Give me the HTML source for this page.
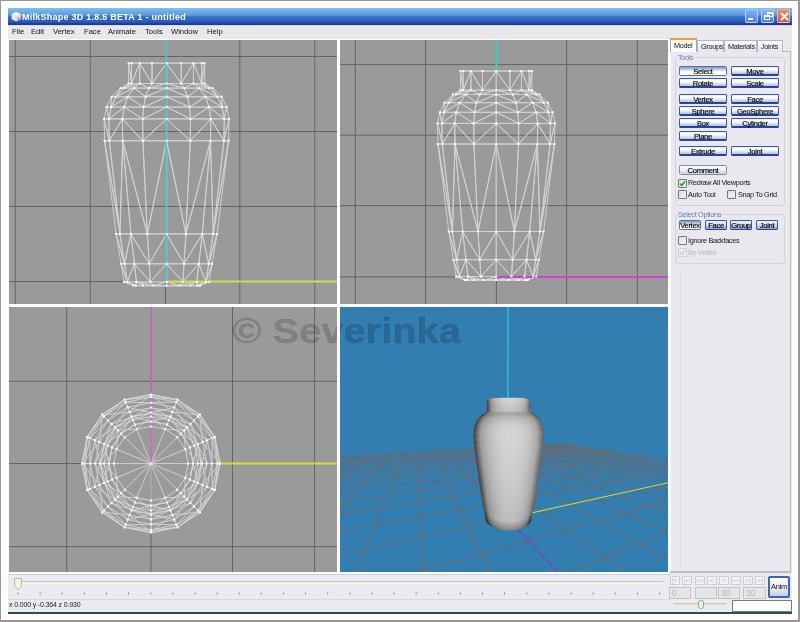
<!DOCTYPE html><html><head><meta charset="utf-8"><style>
*{margin:0;padding:0;box-sizing:border-box}
html,body{width:800px;height:622px;overflow:hidden;background:#fff}
body{position:relative;font-family:"Liberation Sans",sans-serif}
.t,.lbl,.btn,.nf,.ab{will-change:transform}
.a{position:absolute}
.t{position:absolute;white-space:nowrap;line-height:1}
.btn{position:absolute;height:10px;border:1.3px solid #3758a8;border-bottom:2px solid #26459a;border-radius:1.5px;
 background:linear-gradient(#e2e8f5 0%,#ffffff 22%,#f6f8fb 45%,#b2bfdb 100%);
 font-size:7.6px;color:#000;text-align:center;line-height:9px;letter-spacing:-0.3px;white-space:nowrap;overflow:visible;-webkit-text-stroke:0.15px #000}
.btn.p{border:1.2px solid #56709a;background:linear-gradient(#7f97bc 0%,#c9d4e6 35%,#ffffff 60%,#ffffff 100%)}
.chk{position:absolute;width:9px;height:9px;border:1.2px solid #6a788e;border-radius:1px;background:linear-gradient(135deg,#dedfd8,#f7f7f2)}
.lbl{position:absolute;font-size:7.3px;color:#151515;line-height:1;white-space:nowrap;letter-spacing:-0.32px}
.ab{position:absolute;top:576px;width:10px;height:9px;border:1px solid #cfd0d6;background:#f4f4f6;font-size:7px;color:#bbb;text-align:center;line-height:7px}
.nf{position:absolute;top:587px;height:12px;border:1px solid #c2c2c8;background:#e6e5ea;font-size:8.5px;color:#b4b4b8;line-height:10px;padding-left:2px}
</style></head><body>
<div class="a" style="left:0;top:0;width:800px;height:1px;background:#979797"></div>
<div class="a" style="left:0;top:0;width:1px;height:622px;background:#979797"></div>
<div class="a" style="left:798px;top:0;width:2px;height:622px;background:#979797"></div>
<div class="a" style="left:0;top:620px;width:800px;height:2px;background:#979797"></div>
<div class="a" style="left:8px;top:8px;width:784px;height:17px;background:linear-gradient(#80c2ec 0%,#6cb0e9 18%,#5f98e0 42%,#3579cc 50%,#2e68c2 65%,#2a55b1 85%,#1f3f8e 92%,#1d3a88 100%)"></div>
<div class="a" style="left:8px;top:25px;width:784px;height:1px;background:#d4d6f4"></div>
<svg class="a" style="left:9.5px;top:9.5px" width="12.5" height="12.5" viewBox="0 0 14 14">
<path d="M2 4.5L7 2L12 4.5L12 10L7 12.5L2 10Z" fill="#f2f0f0"/>
<path d="M7 7L12 4.5L12 10L7 12.5Z" fill="#d8d6dc"/><path d="M2 4.5L7 7L7 12.5L2 10Z" fill="#ebe8ea"/>
<path d="M8.5 9.5l2.5-1v1.3l-2.5 1z" fill="#e06060"/></svg>
<div class="t" style="left:22px;top:12.6px;font-size:9px;font-weight:bold;color:#fff;letter-spacing:0.25px">MilkShape 3D 1.8.5 BETA 1 - untitled</div>
<div class="a" style="left:744.8px;top:8.5px;width:13.5px;height:14.5px;border:1px solid rgba(235,240,255,0.6);border-radius:2px;background:linear-gradient(#80b6f0,#4c80dc)"><div class="a" style="left:2.5px;top:8.5px;width:5px;height:2px;background:#fff"></div></div>
<div class="a" style="left:760.9px;top:8.5px;width:13.5px;height:14.5px;border:1px solid rgba(235,240,255,0.6);border-radius:2px;background:linear-gradient(#80b6f0,#4c80dc)"><div class="a" style="left:5px;top:2px;width:6px;height:5px;border:1px solid #fff;border-top-width:2px"></div><div class="a" style="left:2px;top:5px;width:6px;height:5px;border:1px solid #fff;border-top-width:2px;background:#5a8ce2"></div></div>
<div class="a" style="left:776.6px;top:8.5px;width:13.5px;height:14.5px;border:1px solid rgba(235,240,255,0.6);border-radius:2px;background:linear-gradient(#ee8a6a,#dc5630)"><svg class="a" style="left:2px;top:2px" width="9" height="9"><path d="M1 1L8 8M8 1L1 8" stroke="#fff" stroke-width="1.8"/></svg></div>
<div class="a" style="left:8px;top:26px;width:784px;height:13px;background:#e9e8ec"></div>
<div class="t" style="left:12.0px;top:28.1px;font-size:7.6px;color:#101010">File</div>
<div class="t" style="left:31.0px;top:28.1px;font-size:7.6px;color:#101010">Edit</div>
<div class="t" style="left:52.5px;top:28.1px;font-size:7.6px;color:#101010">Vertex</div>
<div class="t" style="left:84.0px;top:28.1px;font-size:7.6px;color:#101010">Face</div>
<div class="t" style="left:108.0px;top:28.1px;font-size:7.6px;color:#101010">Animate</div>
<div class="t" style="left:145.0px;top:28.1px;font-size:7.6px;color:#101010">Tools</div>
<div class="t" style="left:170.5px;top:28.1px;font-size:7.6px;color:#101010">Window</div>
<div class="t" style="left:206.5px;top:28.1px;font-size:7.6px;color:#101010">Help</div>
<div class="a" style="left:8px;top:39px;width:662px;height:535px;background:#fdfdfd"></div>
<svg class="a" style="left:0;top:0" width="800" height="622" viewBox="0 0 800 622">
<defs>
<clipPath id="ctl"><rect x="9" y="40" width="328" height="264"/></clipPath>
<clipPath id="ctr"><rect x="340" y="40" width="328" height="264"/></clipPath>
<clipPath id="cbl"><rect x="9" y="307" width="328" height="265"/></clipPath>
<clipPath id="cbr"><rect x="340" y="307" width="328" height="265"/></clipPath>
</defs>
<g clip-path="url(#ctl)"><rect x="9" y="40" width="328" height="264" fill="#9a9a9a"/>
<path d="M15.3 40.0V304.0M90.3 40.0V304.0M165.5 40.0V304.0M239.8 40.0V304.0M314.8 40.0V304.0M9.0 56.5H337.0M9.0 131.5H337.0M9.0 206.5H337.0M9.0 281.5H337.0" stroke="#646464" stroke-width="1.0" fill="none"/>
<path d="M204.6 63.2L201.7 63.2M201.7 63.2L193.5 63.2M193.5 63.2L181.2 63.2M181.2 63.2L166.6 63.2M166.6 63.2L152.0 63.2M152.0 63.2L139.7 63.2M139.7 63.2L131.5 63.2M131.5 63.2L128.6 63.2M128.6 63.2L131.5 63.2M131.5 63.2L139.7 63.2M139.7 63.2L152.0 63.2M152.0 63.2L166.6 63.2M166.6 63.2L181.2 63.2M181.2 63.2L193.5 63.2M193.5 63.2L201.7 63.2M201.7 63.2L204.6 63.2M204.6 83.5L201.7 83.5M201.7 83.5L193.5 83.5M193.5 83.5L181.2 83.5M181.2 83.5L166.6 83.5M166.6 83.5L152.0 83.5M152.0 83.5L139.7 83.5M139.7 83.5L131.5 83.5M131.5 83.5L128.6 83.5M128.6 83.5L131.5 83.5M131.5 83.5L139.7 83.5M139.7 83.5L152.0 83.5M152.0 83.5L166.6 83.5M166.6 83.5L181.2 83.5M181.2 83.5L193.5 83.5M193.5 83.5L201.7 83.5M201.7 83.5L204.6 83.5M212.6 88.1L209.1 88.1M209.1 88.1L199.1 88.1M199.1 88.1L184.2 88.1M184.2 88.1L166.6 88.1M166.6 88.1L149.0 88.1M149.0 88.1L134.1 88.1M134.1 88.1L124.1 88.1M124.1 88.1L120.6 88.1M120.6 88.1L124.1 88.1M124.1 88.1L134.1 88.1M134.1 88.1L149.0 88.1M149.0 88.1L166.6 88.1M166.6 88.1L184.2 88.1M184.2 88.1L199.1 88.1M199.1 88.1L209.1 88.1M209.1 88.1L212.6 88.1M221.6 96.8L217.4 96.8M217.4 96.8L205.5 96.8M205.5 96.8L187.6 96.8M187.6 96.8L166.6 96.8M166.6 96.8L145.6 96.8M145.6 96.8L127.7 96.8M127.7 96.8L115.8 96.8M115.8 96.8L111.6 96.8M111.6 96.8L115.8 96.8M115.8 96.8L127.7 96.8M127.7 96.8L145.6 96.8M145.6 96.8L166.6 96.8M166.6 96.8L187.6 96.8M187.6 96.8L205.5 96.8M205.5 96.8L217.4 96.8M217.4 96.8L221.6 96.8M226.6 107.1L222.0 107.1M222.0 107.1L209.0 107.1M209.0 107.1L189.6 107.1M189.6 107.1L166.6 107.1M166.6 107.1L143.6 107.1M143.6 107.1L124.2 107.1M124.2 107.1L111.2 107.1M111.2 107.1L106.6 107.1M106.6 107.1L111.2 107.1M111.2 107.1L124.2 107.1M124.2 107.1L143.6 107.1M143.6 107.1L166.6 107.1M166.6 107.1L189.6 107.1M189.6 107.1L209.0 107.1M209.0 107.1L222.0 107.1M222.0 107.1L226.6 107.1M229.1 118.9L224.3 118.9M224.3 118.9L210.8 118.9M210.8 118.9L190.5 118.9M190.5 118.9L166.6 118.9M166.6 118.9L142.7 118.9M142.7 118.9L122.4 118.9M122.4 118.9L108.9 118.9M108.9 118.9L104.1 118.9M104.1 118.9L108.9 118.9M108.9 118.9L122.4 118.9M122.4 118.9L142.7 118.9M142.7 118.9L166.6 118.9M166.6 118.9L190.5 118.9M190.5 118.9L210.8 118.9M210.8 118.9L224.3 118.9M224.3 118.9L229.1 118.9M228.6 140.8L223.9 140.8M223.9 140.8L210.5 140.8M210.5 140.8L190.3 140.8M190.3 140.8L166.6 140.8M166.6 140.8L142.9 140.8M142.9 140.8L122.7 140.8M122.7 140.8L109.3 140.8M109.3 140.8L104.6 140.8M104.6 140.8L109.3 140.8M109.3 140.8L122.7 140.8M122.7 140.8L142.9 140.8M142.9 140.8L166.6 140.8M166.6 140.8L190.3 140.8M190.3 140.8L210.5 140.8M210.5 140.8L223.9 140.8M223.9 140.8L228.6 140.8M217.1 233.9L213.2 233.9M213.2 233.9L202.3 233.9M202.3 233.9L185.9 233.9M185.9 233.9L166.6 233.9M166.6 233.9L147.3 233.9M147.3 233.9L130.9 233.9M130.9 233.9L120.0 233.9M120.0 233.9L116.1 233.9M116.1 233.9L120.0 233.9M120.0 233.9L130.9 233.9M130.9 233.9L147.3 233.9M147.3 233.9L166.6 233.9M166.6 233.9L185.9 233.9M185.9 233.9L202.3 233.9M202.3 233.9L213.2 233.9M213.2 233.9L217.1 233.9M212.1 263.8L208.7 263.8M208.7 263.8L198.8 263.8M198.8 263.8L184.0 263.8M184.0 263.8L166.6 263.8M166.6 263.8L149.2 263.8M149.2 263.8L134.4 263.8M134.4 263.8L124.5 263.8M124.5 263.8L121.1 263.8M121.1 263.8L124.5 263.8M124.5 263.8L134.4 263.8M134.4 263.8L149.2 263.8M149.2 263.8L166.6 263.8M166.6 263.8L184.0 263.8M184.0 263.8L198.8 263.8M198.8 263.8L208.7 263.8M208.7 263.8L212.1 263.8M209.1 281.9L205.9 281.9M205.9 281.9L196.7 281.9M196.7 281.9L182.9 281.9M182.9 281.9L166.6 281.9M166.6 281.9L150.3 281.9M150.3 281.9L136.5 281.9M136.5 281.9L127.3 281.9M127.3 281.9L124.1 281.9M124.1 281.9L127.3 281.9M127.3 281.9L136.5 281.9M136.5 281.9L150.3 281.9M150.3 281.9L166.6 281.9M166.6 281.9L182.9 281.9M182.9 281.9L196.7 281.9M196.7 281.9L205.9 281.9M205.9 281.9L209.1 281.9M200.1 285.6L197.6 285.6M197.6 285.6L190.3 285.6M190.3 285.6L179.4 285.6M179.4 285.6L166.6 285.6M166.6 285.6L153.8 285.6M153.8 285.6L142.9 285.6M142.9 285.6L135.6 285.6M135.6 285.6L133.1 285.6M133.1 285.6L135.6 285.6M135.6 285.6L142.9 285.6M142.9 285.6L153.8 285.6M153.8 285.6L166.6 285.6M166.6 285.6L179.4 285.6M179.4 285.6L190.3 285.6M190.3 285.6L197.6 285.6M197.6 285.6L200.1 285.6M204.6 63.2L204.6 83.5M204.6 63.2L201.7 83.5M201.7 63.2L201.7 83.5M193.5 63.2L201.7 83.5M193.5 63.2L193.5 83.5M193.5 63.2L181.2 83.5M181.2 63.2L181.2 83.5M166.6 63.2L181.2 83.5M166.6 63.2L166.6 83.5M166.6 63.2L152.0 83.5M152.0 63.2L152.0 83.5M139.7 63.2L152.0 83.5M139.7 63.2L139.7 83.5M139.7 63.2L131.5 83.5M131.5 63.2L131.5 83.5M128.6 63.2L131.5 83.5M128.6 63.2L128.6 83.5M128.6 63.2L131.5 83.5M131.5 63.2L131.5 83.5M139.7 63.2L131.5 83.5M139.7 63.2L139.7 83.5M139.7 63.2L152.0 83.5M152.0 63.2L152.0 83.5M166.6 63.2L152.0 83.5M166.6 63.2L166.6 83.5M166.6 63.2L181.2 83.5M181.2 63.2L181.2 83.5M193.5 63.2L181.2 83.5M193.5 63.2L193.5 83.5M193.5 63.2L201.7 83.5M201.7 63.2L201.7 83.5M204.6 63.2L201.7 83.5M204.6 83.5L212.6 88.1M204.6 83.5L209.1 88.1M201.7 83.5L209.1 88.1M193.5 83.5L209.1 88.1M193.5 83.5L199.1 88.1M193.5 83.5L184.2 88.1M181.2 83.5L184.2 88.1M166.6 83.5L184.2 88.1M166.6 83.5L166.6 88.1M166.6 83.5L149.0 88.1M152.0 83.5L149.0 88.1M139.7 83.5L149.0 88.1M139.7 83.5L134.1 88.1M139.7 83.5L124.1 88.1M131.5 83.5L124.1 88.1M128.6 83.5L124.1 88.1M128.6 83.5L120.6 88.1M128.6 83.5L124.1 88.1M131.5 83.5L124.1 88.1M139.7 83.5L124.1 88.1M139.7 83.5L134.1 88.1M139.7 83.5L149.0 88.1M152.0 83.5L149.0 88.1M166.6 83.5L149.0 88.1M166.6 83.5L166.6 88.1M166.6 83.5L184.2 88.1M181.2 83.5L184.2 88.1M193.5 83.5L184.2 88.1M193.5 83.5L199.1 88.1M193.5 83.5L209.1 88.1M201.7 83.5L209.1 88.1M204.6 83.5L209.1 88.1M212.6 88.1L221.6 96.8M212.6 88.1L217.4 96.8M209.1 88.1L217.4 96.8M199.1 88.1L217.4 96.8M199.1 88.1L205.5 96.8M199.1 88.1L187.6 96.8M184.2 88.1L187.6 96.8M166.6 88.1L187.6 96.8M166.6 88.1L166.6 96.8M166.6 88.1L145.6 96.8M149.0 88.1L145.6 96.8M134.1 88.1L145.6 96.8M134.1 88.1L127.7 96.8M134.1 88.1L115.8 96.8M124.1 88.1L115.8 96.8M120.6 88.1L115.8 96.8M120.6 88.1L111.6 96.8M120.6 88.1L115.8 96.8M124.1 88.1L115.8 96.8M134.1 88.1L115.8 96.8M134.1 88.1L127.7 96.8M134.1 88.1L145.6 96.8M149.0 88.1L145.6 96.8M166.6 88.1L145.6 96.8M166.6 88.1L166.6 96.8M166.6 88.1L187.6 96.8M184.2 88.1L187.6 96.8M199.1 88.1L187.6 96.8M199.1 88.1L205.5 96.8M199.1 88.1L217.4 96.8M209.1 88.1L217.4 96.8M212.6 88.1L217.4 96.8M221.6 96.8L226.6 107.1M221.6 96.8L222.0 107.1M217.4 96.8L222.0 107.1M205.5 96.8L222.0 107.1M205.5 96.8L209.0 107.1M205.5 96.8L189.6 107.1M187.6 96.8L189.6 107.1M166.6 96.8L189.6 107.1M166.6 96.8L166.6 107.1M166.6 96.8L143.6 107.1M145.6 96.8L143.6 107.1M127.7 96.8L143.6 107.1M127.7 96.8L124.2 107.1M127.7 96.8L111.2 107.1M115.8 96.8L111.2 107.1M111.6 96.8L111.2 107.1M111.6 96.8L106.6 107.1M111.6 96.8L111.2 107.1M115.8 96.8L111.2 107.1M127.7 96.8L111.2 107.1M127.7 96.8L124.2 107.1M127.7 96.8L143.6 107.1M145.6 96.8L143.6 107.1M166.6 96.8L143.6 107.1M166.6 96.8L166.6 107.1M166.6 96.8L189.6 107.1M187.6 96.8L189.6 107.1M205.5 96.8L189.6 107.1M205.5 96.8L209.0 107.1M205.5 96.8L222.0 107.1M217.4 96.8L222.0 107.1M221.6 96.8L222.0 107.1M226.6 107.1L229.1 118.9M226.6 107.1L224.3 118.9M222.0 107.1L224.3 118.9M209.0 107.1L224.3 118.9M209.0 107.1L210.8 118.9M209.0 107.1L190.5 118.9M189.6 107.1L190.5 118.9M166.6 107.1L190.5 118.9M166.6 107.1L166.6 118.9M166.6 107.1L142.7 118.9M143.6 107.1L142.7 118.9M124.2 107.1L142.7 118.9M124.2 107.1L122.4 118.9M124.2 107.1L108.9 118.9M111.2 107.1L108.9 118.9M106.6 107.1L108.9 118.9M106.6 107.1L104.1 118.9M106.6 107.1L108.9 118.9M111.2 107.1L108.9 118.9M124.2 107.1L108.9 118.9M124.2 107.1L122.4 118.9M124.2 107.1L142.7 118.9M143.6 107.1L142.7 118.9M166.6 107.1L142.7 118.9M166.6 107.1L166.6 118.9M166.6 107.1L190.5 118.9M189.6 107.1L190.5 118.9M209.0 107.1L190.5 118.9M209.0 107.1L210.8 118.9M209.0 107.1L224.3 118.9M222.0 107.1L224.3 118.9M226.6 107.1L224.3 118.9M229.1 118.9L228.6 140.8M229.1 118.9L223.9 140.8M224.3 118.9L223.9 140.8M210.8 118.9L223.9 140.8M210.8 118.9L210.5 140.8M210.8 118.9L190.3 140.8M190.5 118.9L190.3 140.8M166.6 118.9L190.3 140.8M166.6 118.9L166.6 140.8M166.6 118.9L142.9 140.8M142.7 118.9L142.9 140.8M122.4 118.9L142.9 140.8M122.4 118.9L122.7 140.8M122.4 118.9L109.3 140.8M108.9 118.9L109.3 140.8M104.1 118.9L109.3 140.8M104.1 118.9L104.6 140.8M104.1 118.9L109.3 140.8M108.9 118.9L109.3 140.8M122.4 118.9L109.3 140.8M122.4 118.9L122.7 140.8M122.4 118.9L142.9 140.8M142.7 118.9L142.9 140.8M166.6 118.9L142.9 140.8M166.6 118.9L166.6 140.8M166.6 118.9L190.3 140.8M190.5 118.9L190.3 140.8M210.8 118.9L190.3 140.8M210.8 118.9L210.5 140.8M210.8 118.9L223.9 140.8M224.3 118.9L223.9 140.8M229.1 118.9L223.9 140.8M228.6 140.8L217.1 233.9M228.6 140.8L213.2 233.9M223.9 140.8L213.2 233.9M210.5 140.8L213.2 233.9M210.5 140.8L202.3 233.9M210.5 140.8L185.9 233.9M190.3 140.8L185.9 233.9M166.6 140.8L185.9 233.9M166.6 140.8L166.6 233.9M166.6 140.8L147.3 233.9M142.9 140.8L147.3 233.9M122.7 140.8L147.3 233.9M122.7 140.8L130.9 233.9M122.7 140.8L120.0 233.9M109.3 140.8L120.0 233.9M104.6 140.8L120.0 233.9M104.6 140.8L116.1 233.9M104.6 140.8L120.0 233.9M109.3 140.8L120.0 233.9M122.7 140.8L120.0 233.9M122.7 140.8L130.9 233.9M122.7 140.8L147.3 233.9M142.9 140.8L147.3 233.9M166.6 140.8L147.3 233.9M166.6 140.8L166.6 233.9M166.6 140.8L185.9 233.9M190.3 140.8L185.9 233.9M210.5 140.8L185.9 233.9M210.5 140.8L202.3 233.9M210.5 140.8L213.2 233.9M223.9 140.8L213.2 233.9M228.6 140.8L213.2 233.9M217.1 233.9L212.1 263.8M217.1 233.9L208.7 263.8M213.2 233.9L208.7 263.8M202.3 233.9L208.7 263.8M202.3 233.9L198.8 263.8M202.3 233.9L184.0 263.8M185.9 233.9L184.0 263.8M166.6 233.9L184.0 263.8M166.6 233.9L166.6 263.8M166.6 233.9L149.2 263.8M147.3 233.9L149.2 263.8M130.9 233.9L149.2 263.8M130.9 233.9L134.4 263.8M130.9 233.9L124.5 263.8M120.0 233.9L124.5 263.8M116.1 233.9L124.5 263.8M116.1 233.9L121.1 263.8M116.1 233.9L124.5 263.8M120.0 233.9L124.5 263.8M130.9 233.9L124.5 263.8M130.9 233.9L134.4 263.8M130.9 233.9L149.2 263.8M147.3 233.9L149.2 263.8M166.6 233.9L149.2 263.8M166.6 233.9L166.6 263.8M166.6 233.9L184.0 263.8M185.9 233.9L184.0 263.8M202.3 233.9L184.0 263.8M202.3 233.9L198.8 263.8M202.3 233.9L208.7 263.8M213.2 233.9L208.7 263.8M217.1 233.9L208.7 263.8M212.1 263.8L209.1 281.9M212.1 263.8L205.9 281.9M208.7 263.8L205.9 281.9M198.8 263.8L205.9 281.9M198.8 263.8L196.7 281.9M198.8 263.8L182.9 281.9M184.0 263.8L182.9 281.9M166.6 263.8L182.9 281.9M166.6 263.8L166.6 281.9M166.6 263.8L150.3 281.9M149.2 263.8L150.3 281.9M134.4 263.8L150.3 281.9M134.4 263.8L136.5 281.9M134.4 263.8L127.3 281.9M124.5 263.8L127.3 281.9M121.1 263.8L127.3 281.9M121.1 263.8L124.1 281.9M121.1 263.8L127.3 281.9M124.5 263.8L127.3 281.9M134.4 263.8L127.3 281.9M134.4 263.8L136.5 281.9M134.4 263.8L150.3 281.9M149.2 263.8L150.3 281.9M166.6 263.8L150.3 281.9M166.6 263.8L166.6 281.9M166.6 263.8L182.9 281.9M184.0 263.8L182.9 281.9M198.8 263.8L182.9 281.9M198.8 263.8L196.7 281.9M198.8 263.8L205.9 281.9M208.7 263.8L205.9 281.9M212.1 263.8L205.9 281.9M209.1 281.9L200.1 285.6M209.1 281.9L197.6 285.6M205.9 281.9L197.6 285.6M196.7 281.9L197.6 285.6M196.7 281.9L190.3 285.6M196.7 281.9L179.4 285.6M182.9 281.9L179.4 285.6M166.6 281.9L179.4 285.6M166.6 281.9L166.6 285.6M166.6 281.9L153.8 285.6M150.3 281.9L153.8 285.6M136.5 281.9L153.8 285.6M136.5 281.9L142.9 285.6M136.5 281.9L135.6 285.6M127.3 281.9L135.6 285.6M124.1 281.9L135.6 285.6M124.1 281.9L133.1 285.6M124.1 281.9L135.6 285.6M127.3 281.9L135.6 285.6M136.5 281.9L135.6 285.6M136.5 281.9L142.9 285.6M136.5 281.9L153.8 285.6M150.3 281.9L153.8 285.6M166.6 281.9L153.8 285.6M166.6 281.9L166.6 285.6M166.6 281.9L179.4 285.6M182.9 281.9L179.4 285.6M196.7 281.9L179.4 285.6M196.7 281.9L190.3 285.6M196.7 281.9L197.6 285.6M205.9 281.9L197.6 285.6M209.1 281.9L197.6 285.6M166.6 285.6L200.1 285.6M166.6 285.6L197.6 285.6M166.6 285.6L190.3 285.6M166.6 285.6L179.4 285.6M166.6 285.6L166.6 285.6M166.6 285.6L153.8 285.6M166.6 285.6L142.9 285.6M166.6 285.6L135.6 285.6M166.6 285.6L133.1 285.6M166.6 285.6L135.6 285.6M166.6 285.6L142.9 285.6M166.6 285.6L153.8 285.6M166.6 285.6L166.6 285.6M166.6 285.6L179.4 285.6M166.6 285.6L190.3 285.6M166.6 285.6L197.6 285.6" stroke="#d2d2d2" stroke-width="0.95" fill="none"/>
<path d="M166 40V281.5" stroke="#4cc8cc" stroke-width="1.8"/>
<path d="M166 281.5H337" stroke="#d8d84a" stroke-width="2"/>
<path d="M203.6 62.2h2v2h-2zM200.7 62.2h2v2h-2zM192.5 62.2h2v2h-2zM180.2 62.2h2v2h-2zM165.6 62.2h2v2h-2zM151.0 62.2h2v2h-2zM138.7 62.2h2v2h-2zM130.5 62.2h2v2h-2zM127.6 62.2h2v2h-2zM203.6 82.5h2v2h-2zM200.7 82.5h2v2h-2zM192.5 82.5h2v2h-2zM180.2 82.5h2v2h-2zM165.6 82.5h2v2h-2zM151.0 82.5h2v2h-2zM138.7 82.5h2v2h-2zM130.5 82.5h2v2h-2zM127.6 82.5h2v2h-2zM211.6 87.1h2v2h-2zM208.1 87.1h2v2h-2zM198.1 87.1h2v2h-2zM183.2 87.1h2v2h-2zM165.6 87.1h2v2h-2zM148.0 87.1h2v2h-2zM133.1 87.1h2v2h-2zM123.1 87.1h2v2h-2zM119.6 87.1h2v2h-2zM220.6 95.8h2v2h-2zM216.4 95.8h2v2h-2zM204.5 95.8h2v2h-2zM186.6 95.8h2v2h-2zM165.6 95.8h2v2h-2zM144.6 95.8h2v2h-2zM126.7 95.8h2v2h-2zM114.8 95.8h2v2h-2zM110.6 95.8h2v2h-2zM225.6 106.1h2v2h-2zM221.0 106.1h2v2h-2zM208.0 106.1h2v2h-2zM188.6 106.1h2v2h-2zM165.6 106.1h2v2h-2zM142.6 106.1h2v2h-2zM123.2 106.1h2v2h-2zM110.2 106.1h2v2h-2zM105.6 106.1h2v2h-2zM228.1 117.9h2v2h-2zM223.3 117.9h2v2h-2zM209.8 117.9h2v2h-2zM189.5 117.9h2v2h-2zM165.6 117.9h2v2h-2zM141.7 117.9h2v2h-2zM121.4 117.9h2v2h-2zM107.9 117.9h2v2h-2zM103.1 117.9h2v2h-2zM227.6 139.8h2v2h-2zM222.9 139.8h2v2h-2zM209.5 139.8h2v2h-2zM189.3 139.8h2v2h-2zM165.6 139.8h2v2h-2zM141.9 139.8h2v2h-2zM121.7 139.8h2v2h-2zM108.3 139.8h2v2h-2zM103.6 139.8h2v2h-2zM216.1 232.9h2v2h-2zM212.2 232.9h2v2h-2zM201.3 232.9h2v2h-2zM184.9 232.9h2v2h-2zM165.6 232.9h2v2h-2zM146.3 232.9h2v2h-2zM129.9 232.9h2v2h-2zM119.0 232.9h2v2h-2zM115.1 232.9h2v2h-2zM211.1 262.8h2v2h-2zM207.7 262.8h2v2h-2zM197.8 262.8h2v2h-2zM183.0 262.8h2v2h-2zM165.6 262.8h2v2h-2zM148.2 262.8h2v2h-2zM133.4 262.8h2v2h-2zM123.5 262.8h2v2h-2zM120.1 262.8h2v2h-2zM208.1 280.9h2v2h-2zM204.9 280.9h2v2h-2zM195.7 280.9h2v2h-2zM181.9 280.9h2v2h-2zM165.6 280.9h2v2h-2zM149.3 280.9h2v2h-2zM135.5 280.9h2v2h-2zM126.3 280.9h2v2h-2zM123.1 280.9h2v2h-2zM199.1 284.6h2v2h-2zM196.6 284.6h2v2h-2zM189.3 284.6h2v2h-2zM178.4 284.6h2v2h-2zM165.6 284.6h2v2h-2zM152.8 284.6h2v2h-2zM141.9 284.6h2v2h-2zM134.6 284.6h2v2h-2zM132.1 284.6h2v2h-2z" fill="#ffffff"/>
</g>
<g clip-path="url(#ctr)"><rect x="340" y="40" width="328" height="264" fill="#9a9a9a"/>
<path d="M355.3 40.0V304.0M425.6 40.0V304.0M496.4 40.0V304.0M566.6 40.0V304.0M637.3 40.0V304.0M340.0 64.6H668.0M340.0 135.2H668.0M340.0 205.6H668.0M340.0 276.9H668.0" stroke="#646464" stroke-width="1.0" fill="none"/>
<path d="M496.5 40V71.5" stroke="#3ccfcf" stroke-width="2"/>
<path d="M496.2 71.1L509.9 71.1M509.9 71.1L521.5 71.1M521.5 71.1L529.2 71.1M529.2 71.1L531.9 71.1M531.9 71.1L529.2 71.1M529.2 71.1L521.5 71.1M521.5 71.1L509.9 71.1M509.9 71.1L496.2 71.1M496.2 71.1L482.5 71.1M482.5 71.1L470.9 71.1M470.9 71.1L463.2 71.1M463.2 71.1L460.5 71.1M460.5 71.1L463.2 71.1M463.2 71.1L470.9 71.1M470.9 71.1L482.5 71.1M482.5 71.1L496.2 71.1M496.2 90.2L509.9 90.2M509.9 90.2L521.5 90.2M521.5 90.2L529.2 90.2M529.2 90.2L531.9 90.2M531.9 90.2L529.2 90.2M529.2 90.2L521.5 90.2M521.5 90.2L509.9 90.2M509.9 90.2L496.2 90.2M496.2 90.2L482.5 90.2M482.5 90.2L470.9 90.2M470.9 90.2L463.2 90.2M463.2 90.2L460.5 90.2M460.5 90.2L463.2 90.2M463.2 90.2L470.9 90.2M470.9 90.2L482.5 90.2M482.5 90.2L496.2 90.2M496.2 94.5L512.7 94.5M512.7 94.5L526.8 94.5M526.8 94.5L536.1 94.5M536.1 94.5L539.4 94.5M539.4 94.5L536.1 94.5M536.1 94.5L526.8 94.5M526.8 94.5L512.7 94.5M512.7 94.5L496.2 94.5M496.2 94.5L479.7 94.5M479.7 94.5L465.6 94.5M465.6 94.5L456.3 94.5M456.3 94.5L453.0 94.5M453.0 94.5L456.3 94.5M456.3 94.5L465.6 94.5M465.6 94.5L479.7 94.5M479.7 94.5L496.2 94.5M496.2 102.7L516.0 102.7M516.0 102.7L532.7 102.7M532.7 102.7L543.9 102.7M543.9 102.7L547.9 102.7M547.9 102.7L543.9 102.7M543.9 102.7L532.7 102.7M532.7 102.7L516.0 102.7M516.0 102.7L496.2 102.7M496.2 102.7L476.4 102.7M476.4 102.7L459.7 102.7M459.7 102.7L448.5 102.7M448.5 102.7L444.5 102.7M444.5 102.7L448.5 102.7M448.5 102.7L459.7 102.7M459.7 102.7L476.4 102.7M476.4 102.7L496.2 102.7M496.2 112.3L517.8 112.3M517.8 112.3L536.1 112.3M536.1 112.3L548.3 112.3M548.3 112.3L552.6 112.3M552.6 112.3L548.3 112.3M548.3 112.3L536.1 112.3M536.1 112.3L517.8 112.3M517.8 112.3L496.2 112.3M496.2 112.3L474.6 112.3M474.6 112.3L456.3 112.3M456.3 112.3L444.1 112.3M444.1 112.3L439.8 112.3M439.8 112.3L444.1 112.3M444.1 112.3L456.3 112.3M456.3 112.3L474.6 112.3M474.6 112.3L496.2 112.3M496.2 123.4L518.7 123.4M518.7 123.4L537.7 123.4M537.7 123.4L550.5 123.4M550.5 123.4L554.9 123.4M554.9 123.4L550.5 123.4M550.5 123.4L537.7 123.4M537.7 123.4L518.7 123.4M518.7 123.4L496.2 123.4M496.2 123.4L473.7 123.4M473.7 123.4L454.7 123.4M454.7 123.4L441.9 123.4M441.9 123.4L437.5 123.4M437.5 123.4L441.9 123.4M441.9 123.4L454.7 123.4M454.7 123.4L473.7 123.4M473.7 123.4L496.2 123.4M496.2 144.0L518.5 144.0M518.5 144.0L537.4 144.0M537.4 144.0L550.1 144.0M550.1 144.0L554.5 144.0M554.5 144.0L550.1 144.0M550.1 144.0L537.4 144.0M537.4 144.0L518.5 144.0M518.5 144.0L496.2 144.0M496.2 144.0L473.9 144.0M473.9 144.0L455.0 144.0M455.0 144.0L442.3 144.0M442.3 144.0L437.9 144.0M437.9 144.0L442.3 144.0M442.3 144.0L455.0 144.0M455.0 144.0L473.9 144.0M473.9 144.0L496.2 144.0M496.2 231.5L514.4 231.5M514.4 231.5L529.7 231.5M529.7 231.5L540.0 231.5M540.0 231.5L543.6 231.5M543.6 231.5L540.0 231.5M540.0 231.5L529.7 231.5M529.7 231.5L514.4 231.5M514.4 231.5L496.2 231.5M496.2 231.5L478.0 231.5M478.0 231.5L462.7 231.5M462.7 231.5L452.4 231.5M452.4 231.5L448.8 231.5M448.8 231.5L452.4 231.5M452.4 231.5L462.7 231.5M462.7 231.5L478.0 231.5M478.0 231.5L496.2 231.5M496.2 259.7L512.6 259.7M512.6 259.7L526.5 259.7M526.5 259.7L535.7 259.7M535.7 259.7L539.0 259.7M539.0 259.7L535.7 259.7M535.7 259.7L526.5 259.7M526.5 259.7L512.6 259.7M512.6 259.7L496.2 259.7M496.2 259.7L479.8 259.7M479.8 259.7L465.9 259.7M465.9 259.7L456.7 259.7M456.7 259.7L453.4 259.7M453.4 259.7L456.7 259.7M456.7 259.7L465.9 259.7M465.9 259.7L479.8 259.7M479.8 259.7L496.2 259.7M496.2 276.6L511.5 276.6M511.5 276.6L524.5 276.6M524.5 276.6L533.1 276.6M533.1 276.6L536.2 276.6M536.2 276.6L533.1 276.6M533.1 276.6L524.5 276.6M524.5 276.6L511.5 276.6M511.5 276.6L496.2 276.6M496.2 276.6L480.9 276.6M480.9 276.6L467.9 276.6M467.9 276.6L459.3 276.6M459.3 276.6L456.2 276.6M456.2 276.6L459.3 276.6M459.3 276.6L467.9 276.6M467.9 276.6L480.9 276.6M480.9 276.6L496.2 276.6M496.2 280.1L508.3 280.1M508.3 280.1L518.5 280.1M518.5 280.1L525.3 280.1M525.3 280.1L527.7 280.1M527.7 280.1L525.3 280.1M525.3 280.1L518.5 280.1M518.5 280.1L508.3 280.1M508.3 280.1L496.2 280.1M496.2 280.1L484.1 280.1M484.1 280.1L473.9 280.1M473.9 280.1L467.1 280.1M467.1 280.1L464.7 280.1M464.7 280.1L467.1 280.1M467.1 280.1L473.9 280.1M473.9 280.1L484.1 280.1M484.1 280.1L496.2 280.1M496.2 71.1L496.2 90.2M496.2 71.1L509.9 90.2M509.9 71.1L509.9 90.2M521.5 71.1L509.9 90.2M521.5 71.1L521.5 90.2M521.5 71.1L529.2 90.2M529.2 71.1L529.2 90.2M531.9 71.1L529.2 90.2M531.9 71.1L531.9 90.2M531.9 71.1L529.2 90.2M529.2 71.1L529.2 90.2M521.5 71.1L529.2 90.2M521.5 71.1L521.5 90.2M521.5 71.1L509.9 90.2M509.9 71.1L509.9 90.2M496.2 71.1L509.9 90.2M496.2 71.1L496.2 90.2M496.2 71.1L482.5 90.2M482.5 71.1L482.5 90.2M470.9 71.1L482.5 90.2M470.9 71.1L470.9 90.2M470.9 71.1L463.2 90.2M463.2 71.1L463.2 90.2M460.5 71.1L463.2 90.2M460.5 71.1L460.5 90.2M460.5 71.1L463.2 90.2M463.2 71.1L463.2 90.2M470.9 71.1L463.2 90.2M470.9 71.1L470.9 90.2M470.9 71.1L482.5 90.2M482.5 71.1L482.5 90.2M496.2 71.1L482.5 90.2M496.2 90.2L496.2 94.5M496.2 90.2L512.7 94.5M509.9 90.2L512.7 94.5M521.5 90.2L512.7 94.5M521.5 90.2L526.8 94.5M521.5 90.2L536.1 94.5M529.2 90.2L536.1 94.5M531.9 90.2L536.1 94.5M531.9 90.2L539.4 94.5M531.9 90.2L536.1 94.5M529.2 90.2L536.1 94.5M521.5 90.2L536.1 94.5M521.5 90.2L526.8 94.5M521.5 90.2L512.7 94.5M509.9 90.2L512.7 94.5M496.2 90.2L512.7 94.5M496.2 90.2L496.2 94.5M496.2 90.2L479.7 94.5M482.5 90.2L479.7 94.5M470.9 90.2L479.7 94.5M470.9 90.2L465.6 94.5M470.9 90.2L456.3 94.5M463.2 90.2L456.3 94.5M460.5 90.2L456.3 94.5M460.5 90.2L453.0 94.5M460.5 90.2L456.3 94.5M463.2 90.2L456.3 94.5M470.9 90.2L456.3 94.5M470.9 90.2L465.6 94.5M470.9 90.2L479.7 94.5M482.5 90.2L479.7 94.5M496.2 90.2L479.7 94.5M496.2 94.5L496.2 102.7M496.2 94.5L516.0 102.7M512.7 94.5L516.0 102.7M526.8 94.5L516.0 102.7M526.8 94.5L532.7 102.7M526.8 94.5L543.9 102.7M536.1 94.5L543.9 102.7M539.4 94.5L543.9 102.7M539.4 94.5L547.9 102.7M539.4 94.5L543.9 102.7M536.1 94.5L543.9 102.7M526.8 94.5L543.9 102.7M526.8 94.5L532.7 102.7M526.8 94.5L516.0 102.7M512.7 94.5L516.0 102.7M496.2 94.5L516.0 102.7M496.2 94.5L496.2 102.7M496.2 94.5L476.4 102.7M479.7 94.5L476.4 102.7M465.6 94.5L476.4 102.7M465.6 94.5L459.7 102.7M465.6 94.5L448.5 102.7M456.3 94.5L448.5 102.7M453.0 94.5L448.5 102.7M453.0 94.5L444.5 102.7M453.0 94.5L448.5 102.7M456.3 94.5L448.5 102.7M465.6 94.5L448.5 102.7M465.6 94.5L459.7 102.7M465.6 94.5L476.4 102.7M479.7 94.5L476.4 102.7M496.2 94.5L476.4 102.7M496.2 102.7L496.2 112.3M496.2 102.7L517.8 112.3M516.0 102.7L517.8 112.3M532.7 102.7L517.8 112.3M532.7 102.7L536.1 112.3M532.7 102.7L548.3 112.3M543.9 102.7L548.3 112.3M547.9 102.7L548.3 112.3M547.9 102.7L552.6 112.3M547.9 102.7L548.3 112.3M543.9 102.7L548.3 112.3M532.7 102.7L548.3 112.3M532.7 102.7L536.1 112.3M532.7 102.7L517.8 112.3M516.0 102.7L517.8 112.3M496.2 102.7L517.8 112.3M496.2 102.7L496.2 112.3M496.2 102.7L474.6 112.3M476.4 102.7L474.6 112.3M459.7 102.7L474.6 112.3M459.7 102.7L456.3 112.3M459.7 102.7L444.1 112.3M448.5 102.7L444.1 112.3M444.5 102.7L444.1 112.3M444.5 102.7L439.8 112.3M444.5 102.7L444.1 112.3M448.5 102.7L444.1 112.3M459.7 102.7L444.1 112.3M459.7 102.7L456.3 112.3M459.7 102.7L474.6 112.3M476.4 102.7L474.6 112.3M496.2 102.7L474.6 112.3M496.2 112.3L496.2 123.4M496.2 112.3L518.7 123.4M517.8 112.3L518.7 123.4M536.1 112.3L518.7 123.4M536.1 112.3L537.7 123.4M536.1 112.3L550.5 123.4M548.3 112.3L550.5 123.4M552.6 112.3L550.5 123.4M552.6 112.3L554.9 123.4M552.6 112.3L550.5 123.4M548.3 112.3L550.5 123.4M536.1 112.3L550.5 123.4M536.1 112.3L537.7 123.4M536.1 112.3L518.7 123.4M517.8 112.3L518.7 123.4M496.2 112.3L518.7 123.4M496.2 112.3L496.2 123.4M496.2 112.3L473.7 123.4M474.6 112.3L473.7 123.4M456.3 112.3L473.7 123.4M456.3 112.3L454.7 123.4M456.3 112.3L441.9 123.4M444.1 112.3L441.9 123.4M439.8 112.3L441.9 123.4M439.8 112.3L437.5 123.4M439.8 112.3L441.9 123.4M444.1 112.3L441.9 123.4M456.3 112.3L441.9 123.4M456.3 112.3L454.7 123.4M456.3 112.3L473.7 123.4M474.6 112.3L473.7 123.4M496.2 112.3L473.7 123.4M496.2 123.4L496.2 144.0M496.2 123.4L518.5 144.0M518.7 123.4L518.5 144.0M537.7 123.4L518.5 144.0M537.7 123.4L537.4 144.0M537.7 123.4L550.1 144.0M550.5 123.4L550.1 144.0M554.9 123.4L550.1 144.0M554.9 123.4L554.5 144.0M554.9 123.4L550.1 144.0M550.5 123.4L550.1 144.0M537.7 123.4L550.1 144.0M537.7 123.4L537.4 144.0M537.7 123.4L518.5 144.0M518.7 123.4L518.5 144.0M496.2 123.4L518.5 144.0M496.2 123.4L496.2 144.0M496.2 123.4L473.9 144.0M473.7 123.4L473.9 144.0M454.7 123.4L473.9 144.0M454.7 123.4L455.0 144.0M454.7 123.4L442.3 144.0M441.9 123.4L442.3 144.0M437.5 123.4L442.3 144.0M437.5 123.4L437.9 144.0M437.5 123.4L442.3 144.0M441.9 123.4L442.3 144.0M454.7 123.4L442.3 144.0M454.7 123.4L455.0 144.0M454.7 123.4L473.9 144.0M473.7 123.4L473.9 144.0M496.2 123.4L473.9 144.0M496.2 144.0L496.2 231.5M496.2 144.0L514.4 231.5M518.5 144.0L514.4 231.5M537.4 144.0L514.4 231.5M537.4 144.0L529.7 231.5M537.4 144.0L540.0 231.5M550.1 144.0L540.0 231.5M554.5 144.0L540.0 231.5M554.5 144.0L543.6 231.5M554.5 144.0L540.0 231.5M550.1 144.0L540.0 231.5M537.4 144.0L540.0 231.5M537.4 144.0L529.7 231.5M537.4 144.0L514.4 231.5M518.5 144.0L514.4 231.5M496.2 144.0L514.4 231.5M496.2 144.0L496.2 231.5M496.2 144.0L478.0 231.5M473.9 144.0L478.0 231.5M455.0 144.0L478.0 231.5M455.0 144.0L462.7 231.5M455.0 144.0L452.4 231.5M442.3 144.0L452.4 231.5M437.9 144.0L452.4 231.5M437.9 144.0L448.8 231.5M437.9 144.0L452.4 231.5M442.3 144.0L452.4 231.5M455.0 144.0L452.4 231.5M455.0 144.0L462.7 231.5M455.0 144.0L478.0 231.5M473.9 144.0L478.0 231.5M496.2 144.0L478.0 231.5M496.2 231.5L496.2 259.7M496.2 231.5L512.6 259.7M514.4 231.5L512.6 259.7M529.7 231.5L512.6 259.7M529.7 231.5L526.5 259.7M529.7 231.5L535.7 259.7M540.0 231.5L535.7 259.7M543.6 231.5L535.7 259.7M543.6 231.5L539.0 259.7M543.6 231.5L535.7 259.7M540.0 231.5L535.7 259.7M529.7 231.5L535.7 259.7M529.7 231.5L526.5 259.7M529.7 231.5L512.6 259.7M514.4 231.5L512.6 259.7M496.2 231.5L512.6 259.7M496.2 231.5L496.2 259.7M496.2 231.5L479.8 259.7M478.0 231.5L479.8 259.7M462.7 231.5L479.8 259.7M462.7 231.5L465.9 259.7M462.7 231.5L456.7 259.7M452.4 231.5L456.7 259.7M448.8 231.5L456.7 259.7M448.8 231.5L453.4 259.7M448.8 231.5L456.7 259.7M452.4 231.5L456.7 259.7M462.7 231.5L456.7 259.7M462.7 231.5L465.9 259.7M462.7 231.5L479.8 259.7M478.0 231.5L479.8 259.7M496.2 231.5L479.8 259.7M496.2 259.7L496.2 276.6M496.2 259.7L511.5 276.6M512.6 259.7L511.5 276.6M526.5 259.7L511.5 276.6M526.5 259.7L524.5 276.6M526.5 259.7L533.1 276.6M535.7 259.7L533.1 276.6M539.0 259.7L533.1 276.6M539.0 259.7L536.2 276.6M539.0 259.7L533.1 276.6M535.7 259.7L533.1 276.6M526.5 259.7L533.1 276.6M526.5 259.7L524.5 276.6M526.5 259.7L511.5 276.6M512.6 259.7L511.5 276.6M496.2 259.7L511.5 276.6M496.2 259.7L496.2 276.6M496.2 259.7L480.9 276.6M479.8 259.7L480.9 276.6M465.9 259.7L480.9 276.6M465.9 259.7L467.9 276.6M465.9 259.7L459.3 276.6M456.7 259.7L459.3 276.6M453.4 259.7L459.3 276.6M453.4 259.7L456.2 276.6M453.4 259.7L459.3 276.6M456.7 259.7L459.3 276.6M465.9 259.7L459.3 276.6M465.9 259.7L467.9 276.6M465.9 259.7L480.9 276.6M479.8 259.7L480.9 276.6M496.2 259.7L480.9 276.6M496.2 276.6L496.2 280.1M496.2 276.6L508.3 280.1M511.5 276.6L508.3 280.1M524.5 276.6L508.3 280.1M524.5 276.6L518.5 280.1M524.5 276.6L525.3 280.1M533.1 276.6L525.3 280.1M536.2 276.6L525.3 280.1M536.2 276.6L527.7 280.1M536.2 276.6L525.3 280.1M533.1 276.6L525.3 280.1M524.5 276.6L525.3 280.1M524.5 276.6L518.5 280.1M524.5 276.6L508.3 280.1M511.5 276.6L508.3 280.1M496.2 276.6L508.3 280.1M496.2 276.6L496.2 280.1M496.2 276.6L484.1 280.1M480.9 276.6L484.1 280.1M467.9 276.6L484.1 280.1M467.9 276.6L473.9 280.1M467.9 276.6L467.1 280.1M459.3 276.6L467.1 280.1M456.2 276.6L467.1 280.1M456.2 276.6L464.7 280.1M456.2 276.6L467.1 280.1M459.3 276.6L467.1 280.1M467.9 276.6L467.1 280.1M467.9 276.6L473.9 280.1M467.9 276.6L484.1 280.1M480.9 276.6L484.1 280.1M496.2 276.6L484.1 280.1M496.2 280.1L496.2 280.1M496.2 280.1L508.3 280.1M496.2 280.1L518.5 280.1M496.2 280.1L525.3 280.1M496.2 280.1L527.7 280.1M496.2 280.1L525.3 280.1M496.2 280.1L518.5 280.1M496.2 280.1L508.3 280.1M496.2 280.1L496.2 280.1M496.2 280.1L484.1 280.1M496.2 280.1L473.9 280.1M496.2 280.1L467.1 280.1M496.2 280.1L464.7 280.1M496.2 280.1L467.1 280.1M496.2 280.1L473.9 280.1M496.2 280.1L484.1 280.1" stroke="#d2d2d2" stroke-width="0.95" fill="none"/>
<path d="M496.5 277H668" stroke="#d040d0" stroke-width="2"/>
<path d="M495.2 70.1h2v2h-2zM508.9 70.1h2v2h-2zM520.5 70.1h2v2h-2zM528.2 70.1h2v2h-2zM530.9 70.1h2v2h-2zM481.5 70.1h2v2h-2zM469.9 70.1h2v2h-2zM462.2 70.1h2v2h-2zM459.5 70.1h2v2h-2zM495.2 89.2h2v2h-2zM508.9 89.2h2v2h-2zM520.5 89.2h2v2h-2zM528.2 89.2h2v2h-2zM530.9 89.2h2v2h-2zM481.5 89.2h2v2h-2zM469.9 89.2h2v2h-2zM462.2 89.2h2v2h-2zM459.5 89.2h2v2h-2zM495.2 93.5h2v2h-2zM511.7 93.5h2v2h-2zM525.8 93.5h2v2h-2zM535.1 93.5h2v2h-2zM538.4 93.5h2v2h-2zM478.7 93.5h2v2h-2zM464.6 93.5h2v2h-2zM455.3 93.5h2v2h-2zM452.0 93.5h2v2h-2zM495.2 101.7h2v2h-2zM515.0 101.7h2v2h-2zM531.7 101.7h2v2h-2zM542.9 101.7h2v2h-2zM546.9 101.7h2v2h-2zM475.4 101.7h2v2h-2zM458.7 101.7h2v2h-2zM447.5 101.7h2v2h-2zM443.5 101.7h2v2h-2zM495.2 111.3h2v2h-2zM516.8 111.3h2v2h-2zM535.1 111.3h2v2h-2zM547.3 111.3h2v2h-2zM551.6 111.3h2v2h-2zM473.6 111.3h2v2h-2zM455.3 111.3h2v2h-2zM443.1 111.3h2v2h-2zM438.8 111.3h2v2h-2zM495.2 122.4h2v2h-2zM517.7 122.4h2v2h-2zM536.7 122.4h2v2h-2zM549.5 122.4h2v2h-2zM553.9 122.4h2v2h-2zM472.7 122.4h2v2h-2zM453.7 122.4h2v2h-2zM440.9 122.4h2v2h-2zM436.5 122.4h2v2h-2zM495.2 143.0h2v2h-2zM517.5 143.0h2v2h-2zM536.4 143.0h2v2h-2zM549.1 143.0h2v2h-2zM553.5 143.0h2v2h-2zM472.9 143.0h2v2h-2zM454.0 143.0h2v2h-2zM441.3 143.0h2v2h-2zM436.9 143.0h2v2h-2zM495.2 230.5h2v2h-2zM513.4 230.5h2v2h-2zM528.7 230.5h2v2h-2zM539.0 230.5h2v2h-2zM542.6 230.5h2v2h-2zM477.0 230.5h2v2h-2zM461.7 230.5h2v2h-2zM451.4 230.5h2v2h-2zM447.8 230.5h2v2h-2zM495.2 258.7h2v2h-2zM511.6 258.7h2v2h-2zM525.5 258.7h2v2h-2zM534.7 258.7h2v2h-2zM538.0 258.7h2v2h-2zM478.8 258.7h2v2h-2zM464.9 258.7h2v2h-2zM455.7 258.7h2v2h-2zM452.4 258.7h2v2h-2zM495.2 275.6h2v2h-2zM510.5 275.6h2v2h-2zM523.5 275.6h2v2h-2zM532.1 275.6h2v2h-2zM535.2 275.6h2v2h-2zM479.9 275.6h2v2h-2zM466.9 275.6h2v2h-2zM458.3 275.6h2v2h-2zM455.2 275.6h2v2h-2zM495.2 279.1h2v2h-2zM507.3 279.1h2v2h-2zM517.5 279.1h2v2h-2zM524.3 279.1h2v2h-2zM526.7 279.1h2v2h-2zM483.1 279.1h2v2h-2zM472.9 279.1h2v2h-2zM466.1 279.1h2v2h-2zM463.7 279.1h2v2h-2z" fill="#ffffff"/>
</g>
<g clip-path="url(#cbl)"><rect x="9" y="307" width="328" height="265" fill="#9a9a9a"/>
<path d="M66.7 307.0V572.0M151.0 307.0V572.0M232.5 307.0V572.0M314.6 307.0V572.0M9.0 381.3H337.0M9.0 463.5H337.0M9.0 546.6H337.0" stroke="#646464" stroke-width="1.0" fill="none"/>
<path d="M193.1 463.5L189.9 447.4M189.9 447.4L180.8 433.7M180.8 433.7L167.1 424.6M167.1 424.6L151.0 421.4M151.0 421.4L134.9 424.6M134.9 424.6L121.2 433.7M121.2 433.7L112.1 447.4M112.1 447.4L108.9 463.5M108.9 463.5L112.1 479.6M112.1 479.6L121.2 493.3M121.2 493.3L134.9 502.4M134.9 502.4L151.0 505.6M151.0 505.6L167.1 502.4M167.1 502.4L180.8 493.3M180.8 493.3L189.9 479.6M189.9 479.6L193.1 463.5M193.1 463.5L189.9 447.4M189.9 447.4L180.8 433.7M180.8 433.7L167.1 424.6M167.1 424.6L151.0 421.4M151.0 421.4L134.9 424.6M134.9 424.6L121.2 433.7M121.2 433.7L112.1 447.4M112.1 447.4L108.9 463.5M108.9 463.5L112.1 479.6M112.1 479.6L121.2 493.3M121.2 493.3L134.9 502.4M134.9 502.4L151.0 505.6M151.0 505.6L167.1 502.4M167.1 502.4L180.8 493.3M180.8 493.3L189.9 479.6M189.9 479.6L193.1 463.5M201.9 463.5L198.0 444.0M198.0 444.0L187.0 427.5M187.0 427.5L170.5 416.5M170.5 416.5L151.0 412.6M151.0 412.6L131.5 416.5M131.5 416.5L115.0 427.5M115.0 427.5L104.0 444.0M104.0 444.0L100.1 463.5M100.1 463.5L104.0 483.0M104.0 483.0L115.0 499.5M115.0 499.5L131.5 510.5M131.5 510.5L151.0 514.4M151.0 514.4L170.5 510.5M170.5 510.5L187.0 499.5M187.0 499.5L198.0 483.0M198.0 483.0L201.9 463.5M211.8 463.5L207.2 440.2M207.2 440.2L194.0 420.5M194.0 420.5L174.3 407.3M174.3 407.3L151.0 402.7M151.0 402.7L127.7 407.3M127.7 407.3L108.0 420.5M108.0 420.5L94.8 440.2M94.8 440.2L90.2 463.5M90.2 463.5L94.8 486.8M94.8 486.8L108.0 506.5M108.0 506.5L127.7 519.7M127.7 519.7L151.0 524.3M151.0 524.3L174.3 519.7M174.3 519.7L194.0 506.5M194.0 506.5L207.2 486.8M207.2 486.8L211.8 463.5M217.4 463.5L212.3 438.1M212.3 438.1L198.0 416.5M198.0 416.5L176.4 402.2M176.4 402.2L151.0 397.1M151.0 397.1L125.6 402.2M125.6 402.2L104.0 416.5M104.0 416.5L89.7 438.1M89.7 438.1L84.6 463.5M84.6 463.5L89.7 488.9M89.7 488.9L104.0 510.5M104.0 510.5L125.6 524.8M125.6 524.8L151.0 529.9M151.0 529.9L176.4 524.8M176.4 524.8L198.0 510.5M198.0 510.5L212.3 488.9M212.3 488.9L217.4 463.5M220.1 463.5L214.9 437.0M214.9 437.0L199.9 414.6M199.9 414.6L177.5 399.6M177.5 399.6L151.0 394.4M151.0 394.4L124.5 399.6M124.5 399.6L102.1 414.6M102.1 414.6L87.1 437.0M87.1 437.0L81.9 463.5M81.9 463.5L87.1 490.0M87.1 490.0L102.1 512.4M102.1 512.4L124.5 527.4M124.5 527.4L151.0 532.6M151.0 532.6L177.5 527.4M177.5 527.4L199.9 512.4M199.9 512.4L214.9 490.0M214.9 490.0L220.1 463.5M219.6 463.5L214.4 437.2M214.4 437.2L199.5 415.0M199.5 415.0L177.3 400.1M177.3 400.1L151.0 394.9M151.0 394.9L124.7 400.1M124.7 400.1L102.5 415.0M102.5 415.0L87.6 437.2M87.6 437.2L82.4 463.5M82.4 463.5L87.6 489.8M87.6 489.8L102.5 512.0M102.5 512.0L124.7 526.9M124.7 526.9L151.0 532.1M151.0 532.1L177.3 526.9M177.3 526.9L199.5 512.0M199.5 512.0L214.4 489.8M214.4 489.8L219.6 463.5M206.9 463.5L202.6 442.1M202.6 442.1L190.5 424.0M190.5 424.0L172.4 411.9M172.4 411.9L151.0 407.6M151.0 407.6L129.6 411.9M129.6 411.9L111.5 424.0M111.5 424.0L99.4 442.1M99.4 442.1L95.1 463.5M95.1 463.5L99.4 484.9M99.4 484.9L111.5 503.0M111.5 503.0L129.6 515.1M129.6 515.1L151.0 519.4M151.0 519.4L172.4 515.1M172.4 515.1L190.5 503.0M190.5 503.0L202.6 484.9M202.6 484.9L206.9 463.5M201.4 463.5L197.5 444.2M197.5 444.2L186.6 427.9M186.6 427.9L170.3 417.0M170.3 417.0L151.0 413.1M151.0 413.1L131.7 417.0M131.7 417.0L115.4 427.9M115.4 427.9L104.5 444.2M104.5 444.2L100.6 463.5M100.6 463.5L104.5 482.8M104.5 482.8L115.4 499.1M115.4 499.1L131.7 510.0M131.7 510.0L151.0 513.9M151.0 513.9L170.3 510.0M170.3 510.0L186.6 499.1M186.6 499.1L197.5 482.8M197.5 482.8L201.4 463.5M198.1 463.5L194.5 445.5M194.5 445.5L184.3 430.2M184.3 430.2L169.0 420.0M169.0 420.0L151.0 416.4M151.0 416.4L133.0 420.0M133.0 420.0L117.7 430.2M117.7 430.2L107.5 445.5M107.5 445.5L103.9 463.5M103.9 463.5L107.5 481.5M107.5 481.5L117.7 496.8M117.7 496.8L133.0 507.0M133.0 507.0L151.0 510.6M151.0 510.6L169.0 507.0M169.0 507.0L184.3 496.8M184.3 496.8L194.5 481.5M194.5 481.5L198.1 463.5M188.1 463.5L185.3 449.3M185.3 449.3L177.2 437.3M177.2 437.3L165.2 429.2M165.2 429.2L151.0 426.4M151.0 426.4L136.8 429.2M136.8 429.2L124.8 437.3M124.8 437.3L116.7 449.3M116.7 449.3L113.9 463.5M113.9 463.5L116.7 477.7M116.7 477.7L124.8 489.7M124.8 489.7L136.8 497.8M136.8 497.8L151.0 500.6M151.0 500.6L165.2 497.8M165.2 497.8L177.2 489.7M177.2 489.7L185.3 477.7M185.3 477.7L188.1 463.5M193.1 463.5L193.1 463.5M193.1 463.5L189.9 447.4M189.9 447.4L189.9 447.4M180.8 433.7L189.9 447.4M180.8 433.7L180.8 433.7M180.8 433.7L167.1 424.6M167.1 424.6L167.1 424.6M151.0 421.4L167.1 424.6M151.0 421.4L151.0 421.4M151.0 421.4L134.9 424.6M134.9 424.6L134.9 424.6M121.2 433.7L134.9 424.6M121.2 433.7L121.2 433.7M121.2 433.7L112.1 447.4M112.1 447.4L112.1 447.4M108.9 463.5L112.1 447.4M108.9 463.5L108.9 463.5M108.9 463.5L112.1 479.6M112.1 479.6L112.1 479.6M121.2 493.3L112.1 479.6M121.2 493.3L121.2 493.3M121.2 493.3L134.9 502.4M134.9 502.4L134.9 502.4M151.0 505.6L134.9 502.4M151.0 505.6L151.0 505.6M151.0 505.6L167.1 502.4M167.1 502.4L167.1 502.4M180.8 493.3L167.1 502.4M180.8 493.3L180.8 493.3M180.8 493.3L189.9 479.6M189.9 479.6L189.9 479.6M193.1 463.5L189.9 479.6M193.1 463.5L201.9 463.5M193.1 463.5L198.0 444.0M189.9 447.4L198.0 444.0M180.8 433.7L198.0 444.0M180.8 433.7L187.0 427.5M180.8 433.7L170.5 416.5M167.1 424.6L170.5 416.5M151.0 421.4L170.5 416.5M151.0 421.4L151.0 412.6M151.0 421.4L131.5 416.5M134.9 424.6L131.5 416.5M121.2 433.7L131.5 416.5M121.2 433.7L115.0 427.5M121.2 433.7L104.0 444.0M112.1 447.4L104.0 444.0M108.9 463.5L104.0 444.0M108.9 463.5L100.1 463.5M108.9 463.5L104.0 483.0M112.1 479.6L104.0 483.0M121.2 493.3L104.0 483.0M121.2 493.3L115.0 499.5M121.2 493.3L131.5 510.5M134.9 502.4L131.5 510.5M151.0 505.6L131.5 510.5M151.0 505.6L151.0 514.4M151.0 505.6L170.5 510.5M167.1 502.4L170.5 510.5M180.8 493.3L170.5 510.5M180.8 493.3L187.0 499.5M180.8 493.3L198.0 483.0M189.9 479.6L198.0 483.0M193.1 463.5L198.0 483.0M201.9 463.5L211.8 463.5M201.9 463.5L207.2 440.2M198.0 444.0L207.2 440.2M187.0 427.5L207.2 440.2M187.0 427.5L194.0 420.5M187.0 427.5L174.3 407.3M170.5 416.5L174.3 407.3M151.0 412.6L174.3 407.3M151.0 412.6L151.0 402.7M151.0 412.6L127.7 407.3M131.5 416.5L127.7 407.3M115.0 427.5L127.7 407.3M115.0 427.5L108.0 420.5M115.0 427.5L94.8 440.2M104.0 444.0L94.8 440.2M100.1 463.5L94.8 440.2M100.1 463.5L90.2 463.5M100.1 463.5L94.8 486.8M104.0 483.0L94.8 486.8M115.0 499.5L94.8 486.8M115.0 499.5L108.0 506.5M115.0 499.5L127.7 519.7M131.5 510.5L127.7 519.7M151.0 514.4L127.7 519.7M151.0 514.4L151.0 524.3M151.0 514.4L174.3 519.7M170.5 510.5L174.3 519.7M187.0 499.5L174.3 519.7M187.0 499.5L194.0 506.5M187.0 499.5L207.2 486.8M198.0 483.0L207.2 486.8M201.9 463.5L207.2 486.8M211.8 463.5L217.4 463.5M211.8 463.5L212.3 438.1M207.2 440.2L212.3 438.1M194.0 420.5L212.3 438.1M194.0 420.5L198.0 416.5M194.0 420.5L176.4 402.2M174.3 407.3L176.4 402.2M151.0 402.7L176.4 402.2M151.0 402.7L151.0 397.1M151.0 402.7L125.6 402.2M127.7 407.3L125.6 402.2M108.0 420.5L125.6 402.2M108.0 420.5L104.0 416.5M108.0 420.5L89.7 438.1M94.8 440.2L89.7 438.1M90.2 463.5L89.7 438.1M90.2 463.5L84.6 463.5M90.2 463.5L89.7 488.9M94.8 486.8L89.7 488.9M108.0 506.5L89.7 488.9M108.0 506.5L104.0 510.5M108.0 506.5L125.6 524.8M127.7 519.7L125.6 524.8M151.0 524.3L125.6 524.8M151.0 524.3L151.0 529.9M151.0 524.3L176.4 524.8M174.3 519.7L176.4 524.8M194.0 506.5L176.4 524.8M194.0 506.5L198.0 510.5M194.0 506.5L212.3 488.9M207.2 486.8L212.3 488.9M211.8 463.5L212.3 488.9M217.4 463.5L220.1 463.5M217.4 463.5L214.9 437.0M212.3 438.1L214.9 437.0M198.0 416.5L214.9 437.0M198.0 416.5L199.9 414.6M198.0 416.5L177.5 399.6M176.4 402.2L177.5 399.6M151.0 397.1L177.5 399.6M151.0 397.1L151.0 394.4M151.0 397.1L124.5 399.6M125.6 402.2L124.5 399.6M104.0 416.5L124.5 399.6M104.0 416.5L102.1 414.6M104.0 416.5L87.1 437.0M89.7 438.1L87.1 437.0M84.6 463.5L87.1 437.0M84.6 463.5L81.9 463.5M84.6 463.5L87.1 490.0M89.7 488.9L87.1 490.0M104.0 510.5L87.1 490.0M104.0 510.5L102.1 512.4M104.0 510.5L124.5 527.4M125.6 524.8L124.5 527.4M151.0 529.9L124.5 527.4M151.0 529.9L151.0 532.6M151.0 529.9L177.5 527.4M176.4 524.8L177.5 527.4M198.0 510.5L177.5 527.4M198.0 510.5L199.9 512.4M198.0 510.5L214.9 490.0M212.3 488.9L214.9 490.0M217.4 463.5L214.9 490.0M220.1 463.5L219.6 463.5M220.1 463.5L214.4 437.2M214.9 437.0L214.4 437.2M199.9 414.6L214.4 437.2M199.9 414.6L199.5 415.0M199.9 414.6L177.3 400.1M177.5 399.6L177.3 400.1M151.0 394.4L177.3 400.1M151.0 394.4L151.0 394.9M151.0 394.4L124.7 400.1M124.5 399.6L124.7 400.1M102.1 414.6L124.7 400.1M102.1 414.6L102.5 415.0M102.1 414.6L87.6 437.2M87.1 437.0L87.6 437.2M81.9 463.5L87.6 437.2M81.9 463.5L82.4 463.5M81.9 463.5L87.6 489.8M87.1 490.0L87.6 489.8M102.1 512.4L87.6 489.8M102.1 512.4L102.5 512.0M102.1 512.4L124.7 526.9M124.5 527.4L124.7 526.9M151.0 532.6L124.7 526.9M151.0 532.6L151.0 532.1M151.0 532.6L177.3 526.9M177.5 527.4L177.3 526.9M199.9 512.4L177.3 526.9M199.9 512.4L199.5 512.0M199.9 512.4L214.4 489.8M214.9 490.0L214.4 489.8M220.1 463.5L214.4 489.8M219.6 463.5L206.9 463.5M219.6 463.5L202.6 442.1M214.4 437.2L202.6 442.1M199.5 415.0L202.6 442.1M199.5 415.0L190.5 424.0M199.5 415.0L172.4 411.9M177.3 400.1L172.4 411.9M151.0 394.9L172.4 411.9M151.0 394.9L151.0 407.6M151.0 394.9L129.6 411.9M124.7 400.1L129.6 411.9M102.5 415.0L129.6 411.9M102.5 415.0L111.5 424.0M102.5 415.0L99.4 442.1M87.6 437.2L99.4 442.1M82.4 463.5L99.4 442.1M82.4 463.5L95.1 463.5M82.4 463.5L99.4 484.9M87.6 489.8L99.4 484.9M102.5 512.0L99.4 484.9M102.5 512.0L111.5 503.0M102.5 512.0L129.6 515.1M124.7 526.9L129.6 515.1M151.0 532.1L129.6 515.1M151.0 532.1L151.0 519.4M151.0 532.1L172.4 515.1M177.3 526.9L172.4 515.1M199.5 512.0L172.4 515.1M199.5 512.0L190.5 503.0M199.5 512.0L202.6 484.9M214.4 489.8L202.6 484.9M219.6 463.5L202.6 484.9M206.9 463.5L201.4 463.5M206.9 463.5L197.5 444.2M202.6 442.1L197.5 444.2M190.5 424.0L197.5 444.2M190.5 424.0L186.6 427.9M190.5 424.0L170.3 417.0M172.4 411.9L170.3 417.0M151.0 407.6L170.3 417.0M151.0 407.6L151.0 413.1M151.0 407.6L131.7 417.0M129.6 411.9L131.7 417.0M111.5 424.0L131.7 417.0M111.5 424.0L115.4 427.9M111.5 424.0L104.5 444.2M99.4 442.1L104.5 444.2M95.1 463.5L104.5 444.2M95.1 463.5L100.6 463.5M95.1 463.5L104.5 482.8M99.4 484.9L104.5 482.8M111.5 503.0L104.5 482.8M111.5 503.0L115.4 499.1M111.5 503.0L131.7 510.0M129.6 515.1L131.7 510.0M151.0 519.4L131.7 510.0M151.0 519.4L151.0 513.9M151.0 519.4L170.3 510.0M172.4 515.1L170.3 510.0M190.5 503.0L170.3 510.0M190.5 503.0L186.6 499.1M190.5 503.0L197.5 482.8M202.6 484.9L197.5 482.8M206.9 463.5L197.5 482.8M201.4 463.5L198.1 463.5M201.4 463.5L194.5 445.5M197.5 444.2L194.5 445.5M186.6 427.9L194.5 445.5M186.6 427.9L184.3 430.2M186.6 427.9L169.0 420.0M170.3 417.0L169.0 420.0M151.0 413.1L169.0 420.0M151.0 413.1L151.0 416.4M151.0 413.1L133.0 420.0M131.7 417.0L133.0 420.0M115.4 427.9L133.0 420.0M115.4 427.9L117.7 430.2M115.4 427.9L107.5 445.5M104.5 444.2L107.5 445.5M100.6 463.5L107.5 445.5M100.6 463.5L103.9 463.5M100.6 463.5L107.5 481.5M104.5 482.8L107.5 481.5M115.4 499.1L107.5 481.5M115.4 499.1L117.7 496.8M115.4 499.1L133.0 507.0M131.7 510.0L133.0 507.0M151.0 513.9L133.0 507.0M151.0 513.9L151.0 510.6M151.0 513.9L169.0 507.0M170.3 510.0L169.0 507.0M186.6 499.1L169.0 507.0M186.6 499.1L184.3 496.8M186.6 499.1L194.5 481.5M197.5 482.8L194.5 481.5M201.4 463.5L194.5 481.5M198.1 463.5L188.1 463.5M198.1 463.5L185.3 449.3M194.5 445.5L185.3 449.3M184.3 430.2L185.3 449.3M184.3 430.2L177.2 437.3M184.3 430.2L165.2 429.2M169.0 420.0L165.2 429.2M151.0 416.4L165.2 429.2M151.0 416.4L151.0 426.4M151.0 416.4L136.8 429.2M133.0 420.0L136.8 429.2M117.7 430.2L136.8 429.2M117.7 430.2L124.8 437.3M117.7 430.2L116.7 449.3M107.5 445.5L116.7 449.3M103.9 463.5L116.7 449.3M103.9 463.5L113.9 463.5M103.9 463.5L116.7 477.7M107.5 481.5L116.7 477.7M117.7 496.8L116.7 477.7M117.7 496.8L124.8 489.7M117.7 496.8L136.8 497.8M133.0 507.0L136.8 497.8M151.0 510.6L136.8 497.8M151.0 510.6L151.0 500.6M151.0 510.6L165.2 497.8M169.0 507.0L165.2 497.8M184.3 496.8L165.2 497.8M184.3 496.8L177.2 489.7M184.3 496.8L185.3 477.7M194.5 481.5L185.3 477.7M198.1 463.5L185.3 477.7M151.0 463.5L188.1 463.5M151.0 463.5L185.3 449.3M151.0 463.5L177.2 437.3M151.0 463.5L165.2 429.2M151.0 463.5L151.0 426.4M151.0 463.5L136.8 429.2M151.0 463.5L124.8 437.3M151.0 463.5L116.7 449.3M151.0 463.5L113.9 463.5M151.0 463.5L116.7 477.7M151.0 463.5L124.8 489.7M151.0 463.5L136.8 497.8M151.0 463.5L151.0 500.6M151.0 463.5L165.2 497.8M151.0 463.5L177.2 489.7M151.0 463.5L185.3 477.7" stroke="#d2d2d2" stroke-width="0.95" fill="none"/>
<path d="M151 307V463.5" stroke="#c468cc" stroke-width="1.7"/>
<path d="M220 463.5H337" stroke="#d8d84a" stroke-width="2"/>
<path d="M192.1 462.5h2v2h-2zM188.9 446.4h2v2h-2zM179.8 432.7h2v2h-2zM166.1 423.6h2v2h-2zM150.0 420.4h2v2h-2zM133.9 423.6h2v2h-2zM120.2 432.7h2v2h-2zM111.1 446.4h2v2h-2zM107.9 462.5h2v2h-2zM111.1 478.6h2v2h-2zM120.2 492.3h2v2h-2zM133.9 501.4h2v2h-2zM150.0 504.6h2v2h-2zM166.1 501.4h2v2h-2zM179.8 492.3h2v2h-2zM188.9 478.6h2v2h-2zM200.9 462.5h2v2h-2zM197.0 443.0h2v2h-2zM186.0 426.5h2v2h-2zM169.5 415.5h2v2h-2zM150.0 411.6h2v2h-2zM130.5 415.5h2v2h-2zM114.0 426.5h2v2h-2zM103.0 443.0h2v2h-2zM99.1 462.5h2v2h-2zM103.0 482.0h2v2h-2zM114.0 498.5h2v2h-2zM130.5 509.5h2v2h-2zM150.0 513.4h2v2h-2zM169.5 509.5h2v2h-2zM186.0 498.5h2v2h-2zM197.0 482.0h2v2h-2zM210.8 462.5h2v2h-2zM206.2 439.2h2v2h-2zM193.0 419.5h2v2h-2zM173.3 406.3h2v2h-2zM150.0 401.7h2v2h-2zM126.7 406.3h2v2h-2zM107.0 419.5h2v2h-2zM93.8 439.2h2v2h-2zM89.2 462.5h2v2h-2zM93.8 485.8h2v2h-2zM107.0 505.5h2v2h-2zM126.7 518.7h2v2h-2zM150.0 523.3h2v2h-2zM173.3 518.7h2v2h-2zM193.0 505.5h2v2h-2zM206.2 485.8h2v2h-2zM216.4 462.5h2v2h-2zM211.3 437.1h2v2h-2zM197.0 415.5h2v2h-2zM175.4 401.2h2v2h-2zM150.0 396.1h2v2h-2zM124.6 401.2h2v2h-2zM103.0 415.5h2v2h-2zM88.7 437.1h2v2h-2zM83.6 462.5h2v2h-2zM88.7 487.9h2v2h-2zM103.0 509.5h2v2h-2zM124.6 523.8h2v2h-2zM150.0 528.9h2v2h-2zM175.4 523.8h2v2h-2zM197.0 509.5h2v2h-2zM211.3 487.9h2v2h-2zM219.1 462.5h2v2h-2zM213.9 436.0h2v2h-2zM198.9 413.6h2v2h-2zM176.5 398.6h2v2h-2zM150.0 393.4h2v2h-2zM123.5 398.6h2v2h-2zM101.1 413.6h2v2h-2zM86.1 436.0h2v2h-2zM80.9 462.5h2v2h-2zM86.1 489.0h2v2h-2zM101.1 511.4h2v2h-2zM123.5 526.4h2v2h-2zM150.0 531.6h2v2h-2zM176.5 526.4h2v2h-2zM198.9 511.4h2v2h-2zM213.9 489.0h2v2h-2zM213.4 436.2h2v2h-2zM150.0 393.9h2v2h-2zM86.6 436.2h2v2h-2zM86.6 488.8h2v2h-2zM150.0 531.1h2v2h-2zM213.4 488.8h2v2h-2zM205.9 462.5h2v2h-2zM201.6 441.1h2v2h-2zM189.5 423.0h2v2h-2zM171.4 410.9h2v2h-2zM150.0 406.6h2v2h-2zM128.6 410.9h2v2h-2zM110.5 423.0h2v2h-2zM98.4 441.1h2v2h-2zM94.1 462.5h2v2h-2zM98.4 483.9h2v2h-2zM110.5 502.0h2v2h-2zM128.6 514.1h2v2h-2zM150.0 518.4h2v2h-2zM171.4 514.1h2v2h-2zM189.5 502.0h2v2h-2zM201.6 483.9h2v2h-2zM200.4 462.5h2v2h-2zM169.3 416.0h2v2h-2zM130.7 416.0h2v2h-2zM99.6 462.5h2v2h-2zM130.7 509.0h2v2h-2zM169.3 509.0h2v2h-2zM197.1 462.5h2v2h-2zM193.5 444.5h2v2h-2zM183.3 429.2h2v2h-2zM168.0 419.0h2v2h-2zM150.0 415.4h2v2h-2zM132.0 419.0h2v2h-2zM116.7 429.2h2v2h-2zM106.5 444.5h2v2h-2zM102.9 462.5h2v2h-2zM106.5 480.5h2v2h-2zM116.7 495.8h2v2h-2zM132.0 506.0h2v2h-2zM150.0 509.6h2v2h-2zM168.0 506.0h2v2h-2zM183.3 495.8h2v2h-2zM193.5 480.5h2v2h-2zM187.1 462.5h2v2h-2zM184.3 448.3h2v2h-2zM176.2 436.3h2v2h-2zM164.2 428.2h2v2h-2zM150.0 425.4h2v2h-2zM135.8 428.2h2v2h-2zM123.8 436.3h2v2h-2zM115.7 448.3h2v2h-2zM112.9 462.5h2v2h-2zM115.7 476.7h2v2h-2zM123.8 488.7h2v2h-2zM135.8 496.8h2v2h-2zM150.0 499.6h2v2h-2zM164.2 496.8h2v2h-2zM176.2 488.7h2v2h-2zM184.3 476.7h2v2h-2zM150.0 462.5h2v2h-2z" fill="#ffffff"/>
</g>
<g clip-path="url(#cbr)"><rect x="340" y="307" width="328" height="265" fill="#337eb1"/>
<path d="M224.6 464.3L-6652.7 2019.8M224.6 464.3L562.8 443.9M250.1 462.8L-5939.9 2019.8M207.2 468.2L569.5 445.0M273.9 461.3L-5227.0 2019.8M186.4 472.9L576.8 446.2M296.1 460.0L-4514.2 2019.8M161.1 478.6L584.9 447.5M316.9 458.7L-3801.3 2019.8M129.5 485.8L593.9 448.9M336.4 457.6L-3088.5 2019.8M89.0 495.0L603.9 450.5M354.7 456.5L-2375.7 2019.8M35.2 507.1L615.1 452.3M372.0 455.4L-1662.8 2019.8M-39.8 524.1L627.7 454.3M388.3 454.4L-950.0 2019.8M-151.2 549.3L642.0 456.6M403.7 453.5L-237.2 2019.8M-334.6 590.8L658.4 459.2M418.3 452.6L475.7 2019.8M-692.7 671.8L677.3 462.2M432.1 451.8L1188.5 2019.8M-1702.3 900.1L699.6 465.7M445.2 451.0L1901.3 2019.8M-6281.4 2019.8L725.9 469.9M457.7 450.3L2614.2 2019.8M-4669.3 2019.8L757.7 475.0M469.5 449.5L3327.0 2019.8M-3057.2 2019.8L796.8 481.2M480.8 448.9L4039.8 2019.8M-1445.1 2019.8L846.1 489.1M491.6 448.2L4752.7 2019.8M166.9 2019.8L910.0 499.2M501.9 447.6L5465.5 2019.8M1779.0 2019.8L996.3 513.0M511.8 447.0L6178.4 2019.8M3391.1 2019.8L1119.2 532.6M521.2 446.4L6891.2 2019.8M5003.2 2019.8L1308.4 562.7M530.2 445.9L7604.0 2019.8M6615.3 2019.8L1637.0 615.1M538.8 445.4L8316.9 2019.8M8227.4 2019.8L2349.8 728.6M547.1 444.9L9029.7 2019.8M9839.5 2019.8L5065.8 1161.3M555.1 444.4L9742.5 2019.8M562.8 443.9L10455.4 2019.8" stroke="#666a70" stroke-width="1.2" fill="none"/>
<path d="M507.6 518.2L1901.3 2019.8" stroke="#7a3fd0" stroke-width="1.1"/>
<path d="M507.6 518.2L781.1 457.7" stroke="#d6d63a" stroke-width="1.1"/>
<path d="M507.6 518.2L509.9 -725.1" stroke="#33d0e0" stroke-width="1.1"/>
<defs><linearGradient id="v18"><stop offset="0.00" stop-color="#c8c8c8"/><stop offset="0.10" stop-color="#cccccc"/><stop offset="0.20" stop-color="#d0d0d0"/><stop offset="0.30" stop-color="#d2d2d2"/><stop offset="0.40" stop-color="#d4d4d4"/><stop offset="0.50" stop-color="#d5d5d5"/><stop offset="0.60" stop-color="#d5d5d5"/><stop offset="0.70" stop-color="#d4d4d4"/><stop offset="0.80" stop-color="#d3d3d3"/><stop offset="0.90" stop-color="#d0d0d0"/><stop offset="1.00" stop-color="#cdcdcd"/></linearGradient><linearGradient id="v19"><stop offset="0.00" stop-color="#a2a2a2"/><stop offset="0.10" stop-color="#b7b7b7"/><stop offset="0.20" stop-color="#c5c5c5"/><stop offset="0.30" stop-color="#cdcdcd"/><stop offset="0.40" stop-color="#d2d2d2"/><stop offset="0.50" stop-color="#d4d4d4"/><stop offset="0.60" stop-color="#d4d4d4"/><stop offset="0.70" stop-color="#d1d1d1"/><stop offset="0.80" stop-color="#cbcbcb"/><stop offset="0.90" stop-color="#bfbfbf"/><stop offset="1.00" stop-color="#adadad"/></linearGradient><linearGradient id="v20"><stop offset="0.00" stop-color="#606060"/><stop offset="0.10" stop-color="#a1a1a1"/><stop offset="0.20" stop-color="#b9b9b9"/><stop offset="0.30" stop-color="#c7c7c7"/><stop offset="0.40" stop-color="#cfcfcf"/><stop offset="0.50" stop-color="#d2d2d2"/><stop offset="0.60" stop-color="#d2d2d2"/><stop offset="0.70" stop-color="#cdcdcd"/><stop offset="0.80" stop-color="#c2c2c2"/><stop offset="0.90" stop-color="#aeaeae"/><stop offset="1.00" stop-color="#757575"/></linearGradient><linearGradient id="v21"><stop offset="0.00" stop-color="#464646"/><stop offset="0.10" stop-color="#9d9d9d"/><stop offset="0.20" stop-color="#b6b6b6"/><stop offset="0.30" stop-color="#c5c5c5"/><stop offset="0.40" stop-color="#cdcdcd"/><stop offset="0.50" stop-color="#d1d1d1"/><stop offset="0.60" stop-color="#d0d0d0"/><stop offset="0.70" stop-color="#cbcbcb"/><stop offset="0.80" stop-color="#c0c0c0"/><stop offset="0.90" stop-color="#ababab"/><stop offset="1.00" stop-color="#656565"/></linearGradient><linearGradient id="v22"><stop offset="0.00" stop-color="#434343"/><stop offset="0.10" stop-color="#9c9c9c"/><stop offset="0.20" stop-color="#b5b5b5"/><stop offset="0.30" stop-color="#c4c4c4"/><stop offset="0.40" stop-color="#cccccc"/><stop offset="0.50" stop-color="#cfcfcf"/><stop offset="0.60" stop-color="#cfcfcf"/><stop offset="0.70" stop-color="#cacaca"/><stop offset="0.80" stop-color="#bfbfbf"/><stop offset="0.90" stop-color="#a9a9a9"/><stop offset="1.00" stop-color="#636363"/></linearGradient><linearGradient id="v23"><stop offset="0.00" stop-color="#414141"/><stop offset="0.10" stop-color="#9a9a9a"/><stop offset="0.20" stop-color="#b4b4b4"/><stop offset="0.30" stop-color="#c2c2c2"/><stop offset="0.40" stop-color="#cacaca"/><stop offset="0.50" stop-color="#cecece"/><stop offset="0.60" stop-color="#cdcdcd"/><stop offset="0.70" stop-color="#c8c8c8"/><stop offset="0.80" stop-color="#bdbdbd"/><stop offset="0.90" stop-color="#a8a8a8"/><stop offset="1.00" stop-color="#616161"/></linearGradient><linearGradient id="v24"><stop offset="0.00" stop-color="#3e3e3e"/><stop offset="0.10" stop-color="#999999"/><stop offset="0.20" stop-color="#b3b3b3"/><stop offset="0.30" stop-color="#c1c1c1"/><stop offset="0.40" stop-color="#c9c9c9"/><stop offset="0.50" stop-color="#cdcdcd"/><stop offset="0.60" stop-color="#cccccc"/><stop offset="0.70" stop-color="#c7c7c7"/><stop offset="0.80" stop-color="#bcbcbc"/><stop offset="0.90" stop-color="#a7a7a7"/><stop offset="1.00" stop-color="#5f5f5f"/></linearGradient><linearGradient id="v25"><stop offset="0.00" stop-color="#3a3a3a"/><stop offset="0.10" stop-color="#989898"/><stop offset="0.20" stop-color="#b1b1b1"/><stop offset="0.30" stop-color="#c0c0c0"/><stop offset="0.40" stop-color="#c8c8c8"/><stop offset="0.50" stop-color="#cbcbcb"/><stop offset="0.60" stop-color="#cbcbcb"/><stop offset="0.70" stop-color="#c5c5c5"/><stop offset="0.80" stop-color="#bababa"/><stop offset="0.90" stop-color="#a5a5a5"/><stop offset="1.00" stop-color="#5c5c5c"/></linearGradient><linearGradient id="v26"><stop offset="0.00" stop-color="#383838"/><stop offset="0.10" stop-color="#979797"/><stop offset="0.20" stop-color="#b0b0b0"/><stop offset="0.30" stop-color="#bebebe"/><stop offset="0.40" stop-color="#c7c7c7"/><stop offset="0.50" stop-color="#cacaca"/><stop offset="0.60" stop-color="#c9c9c9"/><stop offset="0.70" stop-color="#c4c4c4"/><stop offset="0.80" stop-color="#b9b9b9"/><stop offset="0.90" stop-color="#a4a4a4"/><stop offset="1.00" stop-color="#5a5a5a"/></linearGradient><linearGradient id="v27"><stop offset="0.00" stop-color="#373737"/><stop offset="0.10" stop-color="#969696"/><stop offset="0.20" stop-color="#afafaf"/><stop offset="0.30" stop-color="#bdbdbd"/><stop offset="0.40" stop-color="#c5c5c5"/><stop offset="0.50" stop-color="#c9c9c9"/><stop offset="0.60" stop-color="#c8c8c8"/><stop offset="0.70" stop-color="#c3c3c3"/><stop offset="0.80" stop-color="#b8b8b8"/><stop offset="0.90" stop-color="#a3a3a3"/><stop offset="1.00" stop-color="#575757"/></linearGradient><linearGradient id="v28"><stop offset="0.00" stop-color="#373737"/><stop offset="0.10" stop-color="#959595"/><stop offset="0.20" stop-color="#aeaeae"/><stop offset="0.30" stop-color="#bcbcbc"/><stop offset="0.40" stop-color="#c4c4c4"/><stop offset="0.50" stop-color="#c8c8c8"/><stop offset="0.60" stop-color="#c7c7c7"/><stop offset="0.70" stop-color="#c2c2c2"/><stop offset="0.80" stop-color="#b7b7b7"/><stop offset="0.90" stop-color="#a2a2a2"/><stop offset="1.00" stop-color="#545454"/></linearGradient><linearGradient id="v29"><stop offset="0.00" stop-color="#363636"/><stop offset="0.10" stop-color="#949494"/><stop offset="0.20" stop-color="#adadad"/><stop offset="0.30" stop-color="#bbbbbb"/><stop offset="0.40" stop-color="#c3c3c3"/><stop offset="0.50" stop-color="#c6c6c6"/><stop offset="0.60" stop-color="#c6c6c6"/><stop offset="0.70" stop-color="#c1c1c1"/><stop offset="0.80" stop-color="#b7b7b7"/><stop offset="0.90" stop-color="#a2a2a2"/><stop offset="1.00" stop-color="#666666"/></linearGradient><linearGradient id="v30"><stop offset="0.00" stop-color="#353535"/><stop offset="0.10" stop-color="#939393"/><stop offset="0.20" stop-color="#acacac"/><stop offset="0.30" stop-color="#bababa"/><stop offset="0.40" stop-color="#c2c2c2"/><stop offset="0.50" stop-color="#c5c5c5"/><stop offset="0.60" stop-color="#c5c5c5"/><stop offset="0.70" stop-color="#c0c0c0"/><stop offset="0.80" stop-color="#b5b5b5"/><stop offset="0.90" stop-color="#a1a1a1"/><stop offset="1.00" stop-color="#656565"/></linearGradient><linearGradient id="v31"><stop offset="0.00" stop-color="#353535"/><stop offset="0.10" stop-color="#929292"/><stop offset="0.20" stop-color="#ababab"/><stop offset="0.30" stop-color="#b8b8b8"/><stop offset="0.40" stop-color="#c0c0c0"/><stop offset="0.50" stop-color="#c3c3c3"/><stop offset="0.60" stop-color="#c3c3c3"/><stop offset="0.70" stop-color="#bebebe"/><stop offset="0.80" stop-color="#b4b4b4"/><stop offset="0.90" stop-color="#a1a1a1"/><stop offset="1.00" stop-color="#646464"/></linearGradient><linearGradient id="v32"><stop offset="0.00" stop-color="#3d3d3d"/><stop offset="0.10" stop-color="#909090"/><stop offset="0.20" stop-color="#a5a5a5"/><stop offset="0.30" stop-color="#b0b0b0"/><stop offset="0.40" stop-color="#b6b6b6"/><stop offset="0.50" stop-color="#b9b9b9"/><stop offset="0.60" stop-color="#b9b9b9"/><stop offset="0.70" stop-color="#b5b5b5"/><stop offset="0.80" stop-color="#adadad"/><stop offset="0.90" stop-color="#9d9d9d"/><stop offset="1.00" stop-color="#636363"/></linearGradient><linearGradient id="v33"><stop offset="0.00" stop-color="#494949"/><stop offset="0.10" stop-color="#888888"/><stop offset="0.20" stop-color="#9a9a9a"/><stop offset="0.30" stop-color="#a4a4a4"/><stop offset="0.40" stop-color="#aaaaaa"/><stop offset="0.50" stop-color="#acacac"/><stop offset="0.60" stop-color="#acacac"/><stop offset="0.70" stop-color="#a9a9a9"/><stop offset="0.80" stop-color="#a1a1a1"/><stop offset="0.90" stop-color="#929292"/><stop offset="1.00" stop-color="#5d5d5d"/></linearGradient><linearGradient id="v34"><stop offset="0.00" stop-color="#414141"/><stop offset="0.10" stop-color="#7f7f7f"/><stop offset="0.20" stop-color="#929292"/><stop offset="0.30" stop-color="#9c9c9c"/><stop offset="0.40" stop-color="#a2a2a2"/><stop offset="0.50" stop-color="#a5a5a5"/><stop offset="0.60" stop-color="#a4a4a4"/><stop offset="0.70" stop-color="#a0a0a0"/><stop offset="0.80" stop-color="#989898"/><stop offset="0.90" stop-color="#898989"/><stop offset="1.00" stop-color="#555555"/></linearGradient><linearGradient id="v35"><stop offset="0.00" stop-color="#353535"/><stop offset="0.10" stop-color="#7f7f7f"/><stop offset="0.20" stop-color="#949494"/><stop offset="0.30" stop-color="#a0a0a0"/><stop offset="0.40" stop-color="#a6a6a6"/><stop offset="0.50" stop-color="#a9a9a9"/><stop offset="0.60" stop-color="#a9a9a9"/><stop offset="0.70" stop-color="#a4a4a4"/><stop offset="0.80" stop-color="#9b9b9b"/><stop offset="0.90" stop-color="#8a8a8a"/><stop offset="1.00" stop-color="#535353"/></linearGradient><linearGradient id="v36"><stop offset="0.00" stop-color="#3a3a3a"/><stop offset="0.10" stop-color="#838383"/><stop offset="0.20" stop-color="#999999"/><stop offset="0.30" stop-color="#a5a5a5"/><stop offset="0.40" stop-color="#acacac"/><stop offset="0.50" stop-color="#afafaf"/><stop offset="0.60" stop-color="#aeaeae"/><stop offset="0.70" stop-color="#a9a9a9"/><stop offset="0.80" stop-color="#a0a0a0"/><stop offset="0.90" stop-color="#8e8e8e"/><stop offset="1.00" stop-color="#565656"/></linearGradient><linearGradient id="v37"><stop offset="0.00" stop-color="#3e3e3e"/><stop offset="0.10" stop-color="#878787"/><stop offset="0.20" stop-color="#9d9d9d"/><stop offset="0.30" stop-color="#aaaaaa"/><stop offset="0.40" stop-color="#b1b1b1"/><stop offset="0.50" stop-color="#b4b4b4"/><stop offset="0.60" stop-color="#b3b3b3"/><stop offset="0.70" stop-color="#afafaf"/><stop offset="0.80" stop-color="#a5a5a5"/><stop offset="0.90" stop-color="#939393"/><stop offset="1.00" stop-color="#595959"/></linearGradient><linearGradient id="v38"><stop offset="0.00" stop-color="#404040"/><stop offset="0.10" stop-color="#8b8b8b"/><stop offset="0.20" stop-color="#a2a2a2"/><stop offset="0.30" stop-color="#aeaeae"/><stop offset="0.40" stop-color="#b6b6b6"/><stop offset="0.50" stop-color="#b9b9b9"/><stop offset="0.60" stop-color="#b8b8b8"/><stop offset="0.70" stop-color="#b3b3b3"/><stop offset="0.80" stop-color="#aaaaaa"/><stop offset="0.90" stop-color="#979797"/><stop offset="1.00" stop-color="#5c5c5c"/></linearGradient><linearGradient id="v39"><stop offset="0.00" stop-color="#424242"/><stop offset="0.10" stop-color="#8e8e8e"/><stop offset="0.20" stop-color="#a6a6a6"/><stop offset="0.30" stop-color="#b3b3b3"/><stop offset="0.40" stop-color="#bababa"/><stop offset="0.50" stop-color="#bebebe"/><stop offset="0.60" stop-color="#bdbdbd"/><stop offset="0.70" stop-color="#b8b8b8"/><stop offset="0.80" stop-color="#aeaeae"/><stop offset="0.90" stop-color="#9b9b9b"/><stop offset="1.00" stop-color="#5e5e5e"/></linearGradient><linearGradient id="v40"><stop offset="0.00" stop-color="#3d3d3d"/><stop offset="0.10" stop-color="#909090"/><stop offset="0.20" stop-color="#a9a9a9"/><stop offset="0.30" stop-color="#b6b6b6"/><stop offset="0.40" stop-color="#bebebe"/><stop offset="0.50" stop-color="#c1c1c1"/><stop offset="0.60" stop-color="#c0c0c0"/><stop offset="0.70" stop-color="#bbbbbb"/><stop offset="0.80" stop-color="#b1b1b1"/><stop offset="0.90" stop-color="#9d9d9d"/><stop offset="1.00" stop-color="#585858"/></linearGradient><linearGradient id="v41"><stop offset="0.00" stop-color="#414141"/><stop offset="0.10" stop-color="#939393"/><stop offset="0.20" stop-color="#ababab"/><stop offset="0.30" stop-color="#b9b9b9"/><stop offset="0.40" stop-color="#c0c0c0"/><stop offset="0.50" stop-color="#c4c4c4"/><stop offset="0.60" stop-color="#c3c3c3"/><stop offset="0.70" stop-color="#bebebe"/><stop offset="0.80" stop-color="#b3b3b3"/><stop offset="0.90" stop-color="#a0a0a0"/><stop offset="1.00" stop-color="#606060"/></linearGradient><linearGradient id="v42"><stop offset="0.00" stop-color="#3e3e3e"/><stop offset="0.10" stop-color="#949494"/><stop offset="0.20" stop-color="#adadad"/><stop offset="0.30" stop-color="#bbbbbb"/><stop offset="0.40" stop-color="#c3c3c3"/><stop offset="0.50" stop-color="#c6c6c6"/><stop offset="0.60" stop-color="#c6c6c6"/><stop offset="0.70" stop-color="#c1c1c1"/><stop offset="0.80" stop-color="#b6b6b6"/><stop offset="0.90" stop-color="#a1a1a1"/><stop offset="1.00" stop-color="#606060"/></linearGradient><linearGradient id="v43"><stop offset="0.00" stop-color="#3c3c3c"/><stop offset="0.10" stop-color="#969696"/><stop offset="0.20" stop-color="#afafaf"/><stop offset="0.30" stop-color="#bdbdbd"/><stop offset="0.40" stop-color="#c5c5c5"/><stop offset="0.50" stop-color="#c9c9c9"/><stop offset="0.60" stop-color="#c8c8c8"/><stop offset="0.70" stop-color="#c3c3c3"/><stop offset="0.80" stop-color="#b8b8b8"/><stop offset="0.90" stop-color="#a3a3a3"/><stop offset="1.00" stop-color="#5f5f5f"/></linearGradient><linearGradient id="v44"><stop offset="0.00" stop-color="#3b3b3b"/><stop offset="0.10" stop-color="#979797"/><stop offset="0.20" stop-color="#b1b1b1"/><stop offset="0.30" stop-color="#c0c0c0"/><stop offset="0.40" stop-color="#c8c8c8"/><stop offset="0.50" stop-color="#cbcbcb"/><stop offset="0.60" stop-color="#cbcbcb"/><stop offset="0.70" stop-color="#c5c5c5"/><stop offset="0.80" stop-color="#bababa"/><stop offset="0.90" stop-color="#a5a5a5"/><stop offset="1.00" stop-color="#5e5e5e"/></linearGradient><linearGradient id="v45"><stop offset="0.00" stop-color="#393939"/><stop offset="0.10" stop-color="#989898"/><stop offset="0.20" stop-color="#b3b3b3"/><stop offset="0.30" stop-color="#c2c2c2"/><stop offset="0.40" stop-color="#cacaca"/><stop offset="0.50" stop-color="#cecece"/><stop offset="0.60" stop-color="#cdcdcd"/><stop offset="0.70" stop-color="#c7c7c7"/><stop offset="0.80" stop-color="#bcbcbc"/><stop offset="0.90" stop-color="#a6a6a6"/><stop offset="1.00" stop-color="#5c5c5c"/></linearGradient><linearGradient id="v46"><stop offset="0.00" stop-color="#3a3a3a"/><stop offset="0.10" stop-color="#9b9b9b"/><stop offset="0.20" stop-color="#b5b5b5"/><stop offset="0.30" stop-color="#c4c4c4"/><stop offset="0.40" stop-color="#cccccc"/><stop offset="0.50" stop-color="#d0d0d0"/><stop offset="0.60" stop-color="#cfcfcf"/><stop offset="0.70" stop-color="#cacaca"/><stop offset="0.80" stop-color="#bebebe"/><stop offset="0.90" stop-color="#a9a9a9"/><stop offset="1.00" stop-color="#5e5e5e"/></linearGradient><linearGradient id="v47"><stop offset="0.00" stop-color="#404040"/><stop offset="0.10" stop-color="#9c9c9c"/><stop offset="0.20" stop-color="#b6b6b6"/><stop offset="0.30" stop-color="#c5c5c5"/><stop offset="0.40" stop-color="#cdcdcd"/><stop offset="0.50" stop-color="#d1d1d1"/><stop offset="0.60" stop-color="#d0d0d0"/><stop offset="0.70" stop-color="#cbcbcb"/><stop offset="0.80" stop-color="#bfbfbf"/><stop offset="0.90" stop-color="#aaaaaa"/><stop offset="1.00" stop-color="#636363"/></linearGradient><linearGradient id="v48"><stop offset="0.00" stop-color="#414141"/><stop offset="0.10" stop-color="#9c9c9c"/><stop offset="0.20" stop-color="#b6b6b6"/><stop offset="0.30" stop-color="#c6c6c6"/><stop offset="0.40" stop-color="#cecece"/><stop offset="0.50" stop-color="#d2d2d2"/><stop offset="0.60" stop-color="#d1d1d1"/><stop offset="0.70" stop-color="#cccccc"/><stop offset="0.80" stop-color="#c0c0c0"/><stop offset="0.90" stop-color="#aaaaaa"/><stop offset="1.00" stop-color="#636363"/></linearGradient><linearGradient id="v49"><stop offset="0.00" stop-color="#3b3b3b"/><stop offset="0.10" stop-color="#9c9c9c"/><stop offset="0.20" stop-color="#b7b7b7"/><stop offset="0.30" stop-color="#c6c6c6"/><stop offset="0.40" stop-color="#cfcfcf"/><stop offset="0.50" stop-color="#d2d2d2"/><stop offset="0.60" stop-color="#d2d2d2"/><stop offset="0.70" stop-color="#cccccc"/><stop offset="0.80" stop-color="#c1c1c1"/><stop offset="0.90" stop-color="#aaaaaa"/><stop offset="1.00" stop-color="#606060"/></linearGradient><linearGradient id="v50"><stop offset="0.00" stop-color="#3b3b3b"/><stop offset="0.10" stop-color="#9c9c9c"/><stop offset="0.20" stop-color="#b8b8b8"/><stop offset="0.30" stop-color="#c7c7c7"/><stop offset="0.40" stop-color="#cfcfcf"/><stop offset="0.50" stop-color="#d3d3d3"/><stop offset="0.60" stop-color="#d2d2d2"/><stop offset="0.70" stop-color="#cdcdcd"/><stop offset="0.80" stop-color="#c1c1c1"/><stop offset="0.90" stop-color="#aaaaaa"/><stop offset="1.00" stop-color="#606060"/></linearGradient><linearGradient id="v51"><stop offset="0.00" stop-color="#3c3c3c"/><stop offset="0.10" stop-color="#9c9c9c"/><stop offset="0.20" stop-color="#b8b8b8"/><stop offset="0.30" stop-color="#c7c7c7"/><stop offset="0.40" stop-color="#d0d0d0"/><stop offset="0.50" stop-color="#d4d4d4"/><stop offset="0.60" stop-color="#d3d3d3"/><stop offset="0.70" stop-color="#cdcdcd"/><stop offset="0.80" stop-color="#c1c1c1"/><stop offset="0.90" stop-color="#ababab"/><stop offset="1.00" stop-color="#606060"/></linearGradient><linearGradient id="v52"><stop offset="0.00" stop-color="#414141"/><stop offset="0.10" stop-color="#9d9d9d"/><stop offset="0.20" stop-color="#b9b9b9"/><stop offset="0.30" stop-color="#c8c8c8"/><stop offset="0.40" stop-color="#d1d1d1"/><stop offset="0.50" stop-color="#d4d4d4"/><stop offset="0.60" stop-color="#d3d3d3"/><stop offset="0.70" stop-color="#cecece"/><stop offset="0.80" stop-color="#c2c2c2"/><stop offset="0.90" stop-color="#ababab"/><stop offset="1.00" stop-color="#646464"/></linearGradient><linearGradient id="v53"><stop offset="0.00" stop-color="#474747"/><stop offset="0.10" stop-color="#9e9e9e"/><stop offset="0.20" stop-color="#b9b9b9"/><stop offset="0.30" stop-color="#c8c8c8"/><stop offset="0.40" stop-color="#d1d1d1"/><stop offset="0.50" stop-color="#d5d5d5"/><stop offset="0.60" stop-color="#d4d4d4"/><stop offset="0.70" stop-color="#cecece"/><stop offset="0.80" stop-color="#c3c3c3"/><stop offset="0.90" stop-color="#acacac"/><stop offset="1.00" stop-color="#686868"/></linearGradient><linearGradient id="v54"><stop offset="0.00" stop-color="#444444"/><stop offset="0.10" stop-color="#9f9f9f"/><stop offset="0.20" stop-color="#bababa"/><stop offset="0.30" stop-color="#c9c9c9"/><stop offset="0.40" stop-color="#d2d2d2"/><stop offset="0.50" stop-color="#d5d5d5"/><stop offset="0.60" stop-color="#d5d5d5"/><stop offset="0.70" stop-color="#cfcfcf"/><stop offset="0.80" stop-color="#c3c3c3"/><stop offset="0.90" stop-color="#adadad"/><stop offset="1.00" stop-color="#666666"/></linearGradient><linearGradient id="v55"><stop offset="0.00" stop-color="#404040"/><stop offset="0.10" stop-color="#9f9f9f"/><stop offset="0.20" stop-color="#bababa"/><stop offset="0.30" stop-color="#c9c9c9"/><stop offset="0.40" stop-color="#d2d2d2"/><stop offset="0.50" stop-color="#d5d5d5"/><stop offset="0.60" stop-color="#d5d5d5"/><stop offset="0.70" stop-color="#cfcfcf"/><stop offset="0.80" stop-color="#c3c3c3"/><stop offset="0.90" stop-color="#adadad"/><stop offset="1.00" stop-color="#646464"/></linearGradient><linearGradient id="v56"><stop offset="0.00" stop-color="#3c3c3c"/><stop offset="0.10" stop-color="#9e9e9e"/><stop offset="0.20" stop-color="#bababa"/><stop offset="0.30" stop-color="#c9c9c9"/><stop offset="0.40" stop-color="#d2d2d2"/><stop offset="0.50" stop-color="#d5d5d5"/><stop offset="0.60" stop-color="#d5d5d5"/><stop offset="0.70" stop-color="#cfcfcf"/><stop offset="0.80" stop-color="#c3c3c3"/><stop offset="0.90" stop-color="#adadad"/><stop offset="1.00" stop-color="#616161"/></linearGradient><linearGradient id="v57"><stop offset="0.00" stop-color="#363636"/><stop offset="0.10" stop-color="#9e9e9e"/><stop offset="0.20" stop-color="#b9b9b9"/><stop offset="0.30" stop-color="#c9c9c9"/><stop offset="0.40" stop-color="#d1d1d1"/><stop offset="0.50" stop-color="#d5d5d5"/><stop offset="0.60" stop-color="#d4d4d4"/><stop offset="0.70" stop-color="#cfcfcf"/><stop offset="0.80" stop-color="#c3c3c3"/><stop offset="0.90" stop-color="#acacac"/><stop offset="1.00" stop-color="#5e5e5e"/></linearGradient><linearGradient id="v58"><stop offset="0.00" stop-color="#353535"/><stop offset="0.10" stop-color="#9e9e9e"/><stop offset="0.20" stop-color="#b9b9b9"/><stop offset="0.30" stop-color="#c9c9c9"/><stop offset="0.40" stop-color="#d1d1d1"/><stop offset="0.50" stop-color="#d5d5d5"/><stop offset="0.60" stop-color="#d4d4d4"/><stop offset="0.70" stop-color="#cfcfcf"/><stop offset="0.80" stop-color="#c3c3c3"/><stop offset="0.90" stop-color="#acacac"/><stop offset="1.00" stop-color="#5a5a5a"/></linearGradient><linearGradient id="v59"><stop offset="0.00" stop-color="#434343"/><stop offset="0.10" stop-color="#9e9e9e"/><stop offset="0.20" stop-color="#b9b9b9"/><stop offset="0.30" stop-color="#c9c9c9"/><stop offset="0.40" stop-color="#d1d1d1"/><stop offset="0.50" stop-color="#d5d5d5"/><stop offset="0.60" stop-color="#d4d4d4"/><stop offset="0.70" stop-color="#cfcfcf"/><stop offset="0.80" stop-color="#c3c3c3"/><stop offset="0.90" stop-color="#acacac"/><stop offset="1.00" stop-color="#676767"/></linearGradient><linearGradient id="v60"><stop offset="0.00" stop-color="#454545"/><stop offset="0.10" stop-color="#9e9e9e"/><stop offset="0.20" stop-color="#b9b9b9"/><stop offset="0.30" stop-color="#c9c9c9"/><stop offset="0.40" stop-color="#d1d1d1"/><stop offset="0.50" stop-color="#d5d5d5"/><stop offset="0.60" stop-color="#d4d4d4"/><stop offset="0.70" stop-color="#cfcfcf"/><stop offset="0.80" stop-color="#c3c3c3"/><stop offset="0.90" stop-color="#acacac"/><stop offset="1.00" stop-color="#656565"/></linearGradient><linearGradient id="v61"><stop offset="0.00" stop-color="#424242"/><stop offset="0.10" stop-color="#9d9d9d"/><stop offset="0.20" stop-color="#b9b9b9"/><stop offset="0.30" stop-color="#c8c8c8"/><stop offset="0.40" stop-color="#d1d1d1"/><stop offset="0.50" stop-color="#d5d5d5"/><stop offset="0.60" stop-color="#d4d4d4"/><stop offset="0.70" stop-color="#cecece"/><stop offset="0.80" stop-color="#c2c2c2"/><stop offset="0.90" stop-color="#acacac"/><stop offset="1.00" stop-color="#636363"/></linearGradient><linearGradient id="v62"><stop offset="0.00" stop-color="#3d3d3d"/><stop offset="0.10" stop-color="#9d9d9d"/><stop offset="0.20" stop-color="#b9b9b9"/><stop offset="0.30" stop-color="#c8c8c8"/><stop offset="0.40" stop-color="#d1d1d1"/><stop offset="0.50" stop-color="#d5d5d5"/><stop offset="0.60" stop-color="#d4d4d4"/><stop offset="0.70" stop-color="#cecece"/><stop offset="0.80" stop-color="#c2c2c2"/><stop offset="0.90" stop-color="#ababab"/><stop offset="1.00" stop-color="#616161"/></linearGradient><linearGradient id="v63"><stop offset="0.00" stop-color="#373737"/><stop offset="0.10" stop-color="#9d9d9d"/><stop offset="0.20" stop-color="#b8b8b8"/><stop offset="0.30" stop-color="#c8c8c8"/><stop offset="0.40" stop-color="#d1d1d1"/><stop offset="0.50" stop-color="#d4d4d4"/><stop offset="0.60" stop-color="#d4d4d4"/><stop offset="0.70" stop-color="#cecece"/><stop offset="0.80" stop-color="#c2c2c2"/><stop offset="0.90" stop-color="#ababab"/><stop offset="1.00" stop-color="#5e5e5e"/></linearGradient><linearGradient id="v64"><stop offset="0.00" stop-color="#343434"/><stop offset="0.10" stop-color="#9c9c9c"/><stop offset="0.20" stop-color="#b8b8b8"/><stop offset="0.30" stop-color="#c8c8c8"/><stop offset="0.40" stop-color="#d0d0d0"/><stop offset="0.50" stop-color="#d4d4d4"/><stop offset="0.60" stop-color="#d3d3d3"/><stop offset="0.70" stop-color="#cecece"/><stop offset="0.80" stop-color="#c2c2c2"/><stop offset="0.90" stop-color="#ababab"/><stop offset="1.00" stop-color="#595959"/></linearGradient><linearGradient id="v65"><stop offset="0.00" stop-color="#3d3d3d"/><stop offset="0.10" stop-color="#9d9d9d"/><stop offset="0.20" stop-color="#b8b8b8"/><stop offset="0.30" stop-color="#c7c7c7"/><stop offset="0.40" stop-color="#d0d0d0"/><stop offset="0.50" stop-color="#d4d4d4"/><stop offset="0.60" stop-color="#d3d3d3"/><stop offset="0.70" stop-color="#cecece"/><stop offset="0.80" stop-color="#c2c2c2"/><stop offset="0.90" stop-color="#ababab"/><stop offset="1.00" stop-color="#626262"/></linearGradient><linearGradient id="v66"><stop offset="0.00" stop-color="#3d3d3d"/><stop offset="0.10" stop-color="#9d9d9d"/><stop offset="0.20" stop-color="#b8b8b8"/><stop offset="0.30" stop-color="#c7c7c7"/><stop offset="0.40" stop-color="#d0d0d0"/><stop offset="0.50" stop-color="#d4d4d4"/><stop offset="0.60" stop-color="#d3d3d3"/><stop offset="0.70" stop-color="#cdcdcd"/><stop offset="0.80" stop-color="#c2c2c2"/><stop offset="0.90" stop-color="#ababab"/><stop offset="1.00" stop-color="#606060"/></linearGradient><linearGradient id="v67"><stop offset="0.00" stop-color="#424242"/><stop offset="0.10" stop-color="#9d9d9d"/><stop offset="0.20" stop-color="#b8b8b8"/><stop offset="0.30" stop-color="#c7c7c7"/><stop offset="0.40" stop-color="#d0d0d0"/><stop offset="0.50" stop-color="#d3d3d3"/><stop offset="0.60" stop-color="#d3d3d3"/><stop offset="0.70" stop-color="#cdcdcd"/><stop offset="0.80" stop-color="#c1c1c1"/><stop offset="0.90" stop-color="#acacac"/><stop offset="1.00" stop-color="#666666"/></linearGradient><linearGradient id="v68"><stop offset="0.00" stop-color="#3a3a3a"/><stop offset="0.10" stop-color="#9d9d9d"/><stop offset="0.20" stop-color="#b8b8b8"/><stop offset="0.30" stop-color="#c7c7c7"/><stop offset="0.40" stop-color="#cfcfcf"/><stop offset="0.50" stop-color="#d3d3d3"/><stop offset="0.60" stop-color="#d2d2d2"/><stop offset="0.70" stop-color="#cdcdcd"/><stop offset="0.80" stop-color="#c1c1c1"/><stop offset="0.90" stop-color="#ababab"/><stop offset="1.00" stop-color="#616161"/></linearGradient><linearGradient id="v69"><stop offset="0.00" stop-color="#444444"/><stop offset="0.10" stop-color="#9e9e9e"/><stop offset="0.20" stop-color="#b8b8b8"/><stop offset="0.30" stop-color="#c7c7c7"/><stop offset="0.40" stop-color="#cfcfcf"/><stop offset="0.50" stop-color="#d3d3d3"/><stop offset="0.60" stop-color="#d2d2d2"/><stop offset="0.70" stop-color="#cdcdcd"/><stop offset="0.80" stop-color="#c1c1c1"/><stop offset="0.90" stop-color="#acacac"/><stop offset="1.00" stop-color="#646464"/></linearGradient><linearGradient id="v70"><stop offset="0.00" stop-color="#3c3c3c"/><stop offset="0.10" stop-color="#9d9d9d"/><stop offset="0.20" stop-color="#b8b8b8"/><stop offset="0.30" stop-color="#c7c7c7"/><stop offset="0.40" stop-color="#cfcfcf"/><stop offset="0.50" stop-color="#d3d3d3"/><stop offset="0.60" stop-color="#d2d2d2"/><stop offset="0.70" stop-color="#cdcdcd"/><stop offset="0.80" stop-color="#c1c1c1"/><stop offset="0.90" stop-color="#ababab"/><stop offset="1.00" stop-color="#626262"/></linearGradient><linearGradient id="v71"><stop offset="0.00" stop-color="#424242"/><stop offset="0.10" stop-color="#9d9d9d"/><stop offset="0.20" stop-color="#b8b8b8"/><stop offset="0.30" stop-color="#c7c7c7"/><stop offset="0.40" stop-color="#cfcfcf"/><stop offset="0.50" stop-color="#d3d3d3"/><stop offset="0.60" stop-color="#d2d2d2"/><stop offset="0.70" stop-color="#cccccc"/><stop offset="0.80" stop-color="#c1c1c1"/><stop offset="0.90" stop-color="#ababab"/><stop offset="1.00" stop-color="#616161"/></linearGradient><linearGradient id="v72"><stop offset="0.00" stop-color="#3e3e3e"/><stop offset="0.10" stop-color="#9c9c9c"/><stop offset="0.20" stop-color="#b7b7b7"/><stop offset="0.30" stop-color="#c6c6c6"/><stop offset="0.40" stop-color="#cfcfcf"/><stop offset="0.50" stop-color="#d2d2d2"/><stop offset="0.60" stop-color="#d2d2d2"/><stop offset="0.70" stop-color="#cccccc"/><stop offset="0.80" stop-color="#c1c1c1"/><stop offset="0.90" stop-color="#ababab"/><stop offset="1.00" stop-color="#636363"/></linearGradient><linearGradient id="v73"><stop offset="0.00" stop-color="#3e3e3e"/><stop offset="0.10" stop-color="#9c9c9c"/><stop offset="0.20" stop-color="#b7b7b7"/><stop offset="0.30" stop-color="#c6c6c6"/><stop offset="0.40" stop-color="#cfcfcf"/><stop offset="0.50" stop-color="#d2d2d2"/><stop offset="0.60" stop-color="#d2d2d2"/><stop offset="0.70" stop-color="#cccccc"/><stop offset="0.80" stop-color="#c1c1c1"/><stop offset="0.90" stop-color="#aaaaaa"/><stop offset="1.00" stop-color="#5d5d5d"/></linearGradient><linearGradient id="v74"><stop offset="0.00" stop-color="#424242"/><stop offset="0.10" stop-color="#9d9d9d"/><stop offset="0.20" stop-color="#b7b7b7"/><stop offset="0.30" stop-color="#c6c6c6"/><stop offset="0.40" stop-color="#cecece"/><stop offset="0.50" stop-color="#d2d2d2"/><stop offset="0.60" stop-color="#d1d1d1"/><stop offset="0.70" stop-color="#cccccc"/><stop offset="0.80" stop-color="#c1c1c1"/><stop offset="0.90" stop-color="#ababab"/><stop offset="1.00" stop-color="#656565"/></linearGradient><linearGradient id="v75"><stop offset="0.00" stop-color="#3a3a3a"/><stop offset="0.10" stop-color="#9c9c9c"/><stop offset="0.20" stop-color="#b7b7b7"/><stop offset="0.30" stop-color="#c6c6c6"/><stop offset="0.40" stop-color="#cecece"/><stop offset="0.50" stop-color="#d2d2d2"/><stop offset="0.60" stop-color="#d1d1d1"/><stop offset="0.70" stop-color="#cccccc"/><stop offset="0.80" stop-color="#c1c1c1"/><stop offset="0.90" stop-color="#ababab"/><stop offset="1.00" stop-color="#636363"/></linearGradient><linearGradient id="v76"><stop offset="0.00" stop-color="#454545"/><stop offset="0.10" stop-color="#9d9d9d"/><stop offset="0.20" stop-color="#b7b7b7"/><stop offset="0.30" stop-color="#c6c6c6"/><stop offset="0.40" stop-color="#cecece"/><stop offset="0.50" stop-color="#d2d2d2"/><stop offset="0.60" stop-color="#d1d1d1"/><stop offset="0.70" stop-color="#cccccc"/><stop offset="0.80" stop-color="#c0c0c0"/><stop offset="0.90" stop-color="#ababab"/><stop offset="1.00" stop-color="#626262"/></linearGradient><linearGradient id="v77"><stop offset="0.00" stop-color="#3c3c3c"/><stop offset="0.10" stop-color="#9c9c9c"/><stop offset="0.20" stop-color="#b7b7b7"/><stop offset="0.30" stop-color="#c5c5c5"/><stop offset="0.40" stop-color="#cecece"/><stop offset="0.50" stop-color="#d1d1d1"/><stop offset="0.60" stop-color="#d1d1d1"/><stop offset="0.70" stop-color="#cbcbcb"/><stop offset="0.80" stop-color="#c0c0c0"/><stop offset="0.90" stop-color="#ababab"/><stop offset="1.00" stop-color="#646464"/></linearGradient><linearGradient id="v78"><stop offset="0.00" stop-color="#424242"/><stop offset="0.10" stop-color="#9d9d9d"/><stop offset="0.20" stop-color="#b7b7b7"/><stop offset="0.30" stop-color="#c5c5c5"/><stop offset="0.40" stop-color="#cecece"/><stop offset="0.50" stop-color="#d1d1d1"/><stop offset="0.60" stop-color="#d1d1d1"/><stop offset="0.70" stop-color="#cbcbcb"/><stop offset="0.80" stop-color="#c0c0c0"/><stop offset="0.90" stop-color="#aaaaaa"/><stop offset="1.00" stop-color="#5f5f5f"/></linearGradient><linearGradient id="v79"><stop offset="0.00" stop-color="#3f3f3f"/><stop offset="0.10" stop-color="#9c9c9c"/><stop offset="0.20" stop-color="#b6b6b6"/><stop offset="0.30" stop-color="#c5c5c5"/><stop offset="0.40" stop-color="#cdcdcd"/><stop offset="0.50" stop-color="#d1d1d1"/><stop offset="0.60" stop-color="#d0d0d0"/><stop offset="0.70" stop-color="#cbcbcb"/><stop offset="0.80" stop-color="#c0c0c0"/><stop offset="0.90" stop-color="#ababab"/><stop offset="1.00" stop-color="#666666"/></linearGradient><linearGradient id="v80"><stop offset="0.00" stop-color="#3f3f3f"/><stop offset="0.10" stop-color="#9c9c9c"/><stop offset="0.20" stop-color="#b6b6b6"/><stop offset="0.30" stop-color="#c5c5c5"/><stop offset="0.40" stop-color="#cdcdcd"/><stop offset="0.50" stop-color="#d1d1d1"/><stop offset="0.60" stop-color="#d0d0d0"/><stop offset="0.70" stop-color="#cbcbcb"/><stop offset="0.80" stop-color="#c0c0c0"/><stop offset="0.90" stop-color="#aaaaaa"/><stop offset="1.00" stop-color="#606060"/></linearGradient><linearGradient id="v81"><stop offset="0.00" stop-color="#434343"/><stop offset="0.10" stop-color="#9b9b9b"/><stop offset="0.20" stop-color="#b6b6b6"/><stop offset="0.30" stop-color="#c5c5c5"/><stop offset="0.40" stop-color="#cdcdcd"/><stop offset="0.50" stop-color="#d1d1d1"/><stop offset="0.60" stop-color="#d0d0d0"/><stop offset="0.70" stop-color="#cbcbcb"/><stop offset="0.80" stop-color="#bfbfbf"/><stop offset="0.90" stop-color="#aaaaaa"/><stop offset="1.00" stop-color="#636363"/></linearGradient><linearGradient id="v82"><stop offset="0.00" stop-color="#3b3b3b"/><stop offset="0.10" stop-color="#9b9b9b"/><stop offset="0.20" stop-color="#b6b6b6"/><stop offset="0.30" stop-color="#c5c5c5"/><stop offset="0.40" stop-color="#cdcdcd"/><stop offset="0.50" stop-color="#d0d0d0"/><stop offset="0.60" stop-color="#d0d0d0"/><stop offset="0.70" stop-color="#cbcbcb"/><stop offset="0.80" stop-color="#bfbfbf"/><stop offset="0.90" stop-color="#a9a9a9"/><stop offset="1.00" stop-color="#616161"/></linearGradient><linearGradient id="v83"><stop offset="0.00" stop-color="#464646"/><stop offset="0.10" stop-color="#9c9c9c"/><stop offset="0.20" stop-color="#b6b6b6"/><stop offset="0.30" stop-color="#c4c4c4"/><stop offset="0.40" stop-color="#cdcdcd"/><stop offset="0.50" stop-color="#d0d0d0"/><stop offset="0.60" stop-color="#d0d0d0"/><stop offset="0.70" stop-color="#cacaca"/><stop offset="0.80" stop-color="#bfbfbf"/><stop offset="0.90" stop-color="#a9a9a9"/><stop offset="1.00" stop-color="#616161"/></linearGradient><linearGradient id="v84"><stop offset="0.00" stop-color="#3d3d3d"/><stop offset="0.10" stop-color="#9b9b9b"/><stop offset="0.20" stop-color="#b5b5b5"/><stop offset="0.30" stop-color="#c4c4c4"/><stop offset="0.40" stop-color="#cccccc"/><stop offset="0.50" stop-color="#d0d0d0"/><stop offset="0.60" stop-color="#cfcfcf"/><stop offset="0.70" stop-color="#cacaca"/><stop offset="0.80" stop-color="#bfbfbf"/><stop offset="0.90" stop-color="#aaaaaa"/><stop offset="1.00" stop-color="#666666"/></linearGradient><linearGradient id="v85"><stop offset="0.00" stop-color="#434343"/><stop offset="0.10" stop-color="#9c9c9c"/><stop offset="0.20" stop-color="#b5b5b5"/><stop offset="0.30" stop-color="#c4c4c4"/><stop offset="0.40" stop-color="#cccccc"/><stop offset="0.50" stop-color="#d0d0d0"/><stop offset="0.60" stop-color="#cfcfcf"/><stop offset="0.70" stop-color="#cacaca"/><stop offset="0.80" stop-color="#bfbfbf"/><stop offset="0.90" stop-color="#a9a9a9"/><stop offset="1.00" stop-color="#616161"/></linearGradient><linearGradient id="v86"><stop offset="0.00" stop-color="#3f3f3f"/><stop offset="0.10" stop-color="#9b9b9b"/><stop offset="0.20" stop-color="#b5b5b5"/><stop offset="0.30" stop-color="#c4c4c4"/><stop offset="0.40" stop-color="#cccccc"/><stop offset="0.50" stop-color="#d0d0d0"/><stop offset="0.60" stop-color="#cfcfcf"/><stop offset="0.70" stop-color="#cacaca"/><stop offset="0.80" stop-color="#bfbfbf"/><stop offset="0.90" stop-color="#aaaaaa"/><stop offset="1.00" stop-color="#646464"/></linearGradient><linearGradient id="v87"><stop offset="0.00" stop-color="#3f3f3f"/><stop offset="0.10" stop-color="#9b9b9b"/><stop offset="0.20" stop-color="#b5b5b5"/><stop offset="0.30" stop-color="#c4c4c4"/><stop offset="0.40" stop-color="#cccccc"/><stop offset="0.50" stop-color="#cfcfcf"/><stop offset="0.60" stop-color="#cfcfcf"/><stop offset="0.70" stop-color="#cacaca"/><stop offset="0.80" stop-color="#bebebe"/><stop offset="0.90" stop-color="#a9a9a9"/><stop offset="1.00" stop-color="#626262"/></linearGradient><linearGradient id="v88"><stop offset="0.00" stop-color="#3e3e3e"/><stop offset="0.10" stop-color="#9b9b9b"/><stop offset="0.20" stop-color="#b5b5b5"/><stop offset="0.30" stop-color="#c3c3c3"/><stop offset="0.40" stop-color="#cccccc"/><stop offset="0.50" stop-color="#cfcfcf"/><stop offset="0.60" stop-color="#cfcfcf"/><stop offset="0.70" stop-color="#c9c9c9"/><stop offset="0.80" stop-color="#bebebe"/><stop offset="0.90" stop-color="#a9a9a9"/><stop offset="1.00" stop-color="#616161"/></linearGradient><linearGradient id="v89"><stop offset="0.00" stop-color="#3b3b3b"/><stop offset="0.10" stop-color="#9a9a9a"/><stop offset="0.20" stop-color="#b4b4b4"/><stop offset="0.30" stop-color="#c3c3c3"/><stop offset="0.40" stop-color="#cbcbcb"/><stop offset="0.50" stop-color="#cfcfcf"/><stop offset="0.60" stop-color="#cecece"/><stop offset="0.70" stop-color="#c9c9c9"/><stop offset="0.80" stop-color="#bebebe"/><stop offset="0.90" stop-color="#a8a8a8"/><stop offset="1.00" stop-color="#636363"/></linearGradient><linearGradient id="v90"><stop offset="0.00" stop-color="#414141"/><stop offset="0.10" stop-color="#9a9a9a"/><stop offset="0.20" stop-color="#b4b4b4"/><stop offset="0.30" stop-color="#c3c3c3"/><stop offset="0.40" stop-color="#cbcbcb"/><stop offset="0.50" stop-color="#cfcfcf"/><stop offset="0.60" stop-color="#cecece"/><stop offset="0.70" stop-color="#c9c9c9"/><stop offset="0.80" stop-color="#bebebe"/><stop offset="0.90" stop-color="#a8a8a8"/><stop offset="1.00" stop-color="#5e5e5e"/></linearGradient><linearGradient id="v91"><stop offset="0.00" stop-color="#373737"/><stop offset="0.10" stop-color="#9a9a9a"/><stop offset="0.20" stop-color="#b4b4b4"/><stop offset="0.30" stop-color="#c3c3c3"/><stop offset="0.40" stop-color="#cbcbcb"/><stop offset="0.50" stop-color="#cecece"/><stop offset="0.60" stop-color="#cecece"/><stop offset="0.70" stop-color="#c9c9c9"/><stop offset="0.80" stop-color="#bebebe"/><stop offset="0.90" stop-color="#a8a8a8"/><stop offset="1.00" stop-color="#656565"/></linearGradient><linearGradient id="v92"><stop offset="0.00" stop-color="#434343"/><stop offset="0.10" stop-color="#9a9a9a"/><stop offset="0.20" stop-color="#b4b4b4"/><stop offset="0.30" stop-color="#c2c2c2"/><stop offset="0.40" stop-color="#cbcbcb"/><stop offset="0.50" stop-color="#cecece"/><stop offset="0.60" stop-color="#cecece"/><stop offset="0.70" stop-color="#c8c8c8"/><stop offset="0.80" stop-color="#bebebe"/><stop offset="0.90" stop-color="#a8a8a8"/><stop offset="1.00" stop-color="#636363"/></linearGradient><linearGradient id="v93"><stop offset="0.00" stop-color="#3a3a3a"/><stop offset="0.10" stop-color="#9a9a9a"/><stop offset="0.20" stop-color="#b4b4b4"/><stop offset="0.30" stop-color="#c2c2c2"/><stop offset="0.40" stop-color="#cacaca"/><stop offset="0.50" stop-color="#cecece"/><stop offset="0.60" stop-color="#cdcdcd"/><stop offset="0.70" stop-color="#c8c8c8"/><stop offset="0.80" stop-color="#bdbdbd"/><stop offset="0.90" stop-color="#a8a8a8"/><stop offset="1.00" stop-color="#626262"/></linearGradient><linearGradient id="v94"><stop offset="0.00" stop-color="#3f3f3f"/><stop offset="0.10" stop-color="#9a9a9a"/><stop offset="0.20" stop-color="#b3b3b3"/><stop offset="0.30" stop-color="#c2c2c2"/><stop offset="0.40" stop-color="#cacaca"/><stop offset="0.50" stop-color="#cecece"/><stop offset="0.60" stop-color="#cdcdcd"/><stop offset="0.70" stop-color="#c8c8c8"/><stop offset="0.80" stop-color="#bdbdbd"/><stop offset="0.90" stop-color="#a8a8a8"/><stop offset="1.00" stop-color="#646464"/></linearGradient><linearGradient id="v95"><stop offset="0.00" stop-color="#3e3e3e"/><stop offset="0.10" stop-color="#9a9a9a"/><stop offset="0.20" stop-color="#b3b3b3"/><stop offset="0.30" stop-color="#c2c2c2"/><stop offset="0.40" stop-color="#cacaca"/><stop offset="0.50" stop-color="#cdcdcd"/><stop offset="0.60" stop-color="#cdcdcd"/><stop offset="0.70" stop-color="#c8c8c8"/><stop offset="0.80" stop-color="#bdbdbd"/><stop offset="0.90" stop-color="#a8a8a8"/><stop offset="1.00" stop-color="#5f5f5f"/></linearGradient><linearGradient id="v96"><stop offset="0.00" stop-color="#3b3b3b"/><stop offset="0.10" stop-color="#9a9a9a"/><stop offset="0.20" stop-color="#b3b3b3"/><stop offset="0.30" stop-color="#c2c2c2"/><stop offset="0.40" stop-color="#cacaca"/><stop offset="0.50" stop-color="#cdcdcd"/><stop offset="0.60" stop-color="#cdcdcd"/><stop offset="0.70" stop-color="#c8c8c8"/><stop offset="0.80" stop-color="#bdbdbd"/><stop offset="0.90" stop-color="#a8a8a8"/><stop offset="1.00" stop-color="#666666"/></linearGradient><linearGradient id="v97"><stop offset="0.00" stop-color="#414141"/><stop offset="0.10" stop-color="#999999"/><stop offset="0.20" stop-color="#b3b3b3"/><stop offset="0.30" stop-color="#c1c1c1"/><stop offset="0.40" stop-color="#c9c9c9"/><stop offset="0.50" stop-color="#cdcdcd"/><stop offset="0.60" stop-color="#cccccc"/><stop offset="0.70" stop-color="#c7c7c7"/><stop offset="0.80" stop-color="#bcbcbc"/><stop offset="0.90" stop-color="#a7a7a7"/><stop offset="1.00" stop-color="#606060"/></linearGradient><linearGradient id="v98"><stop offset="0.00" stop-color="#383838"/><stop offset="0.10" stop-color="#989898"/><stop offset="0.20" stop-color="#b2b2b2"/><stop offset="0.30" stop-color="#c1c1c1"/><stop offset="0.40" stop-color="#c9c9c9"/><stop offset="0.50" stop-color="#cdcdcd"/><stop offset="0.60" stop-color="#cccccc"/><stop offset="0.70" stop-color="#c7c7c7"/><stop offset="0.80" stop-color="#bcbcbc"/><stop offset="0.90" stop-color="#a7a7a7"/><stop offset="1.00" stop-color="#636363"/></linearGradient><linearGradient id="v99"><stop offset="0.00" stop-color="#434343"/><stop offset="0.10" stop-color="#999999"/><stop offset="0.20" stop-color="#b3b3b3"/><stop offset="0.30" stop-color="#c1c1c1"/><stop offset="0.40" stop-color="#c9c9c9"/><stop offset="0.50" stop-color="#cccccc"/><stop offset="0.60" stop-color="#cccccc"/><stop offset="0.70" stop-color="#c7c7c7"/><stop offset="0.80" stop-color="#bcbcbc"/><stop offset="0.90" stop-color="#a7a7a7"/><stop offset="1.00" stop-color="#606060"/></linearGradient><linearGradient id="v100"><stop offset="0.00" stop-color="#3b3b3b"/><stop offset="0.10" stop-color="#989898"/><stop offset="0.20" stop-color="#b2b2b2"/><stop offset="0.30" stop-color="#c1c1c1"/><stop offset="0.40" stop-color="#c9c9c9"/><stop offset="0.50" stop-color="#cccccc"/><stop offset="0.60" stop-color="#cbcbcb"/><stop offset="0.70" stop-color="#c6c6c6"/><stop offset="0.80" stop-color="#bcbcbc"/><stop offset="0.90" stop-color="#a6a6a6"/><stop offset="1.00" stop-color="#606060"/></linearGradient><linearGradient id="v101"><stop offset="0.00" stop-color="#3f3f3f"/><stop offset="0.10" stop-color="#989898"/><stop offset="0.20" stop-color="#b2b2b2"/><stop offset="0.30" stop-color="#c0c0c0"/><stop offset="0.40" stop-color="#c8c8c8"/><stop offset="0.50" stop-color="#cccccc"/><stop offset="0.60" stop-color="#cbcbcb"/><stop offset="0.70" stop-color="#c6c6c6"/><stop offset="0.80" stop-color="#bbbbbb"/><stop offset="0.90" stop-color="#a7a7a7"/><stop offset="1.00" stop-color="#666666"/></linearGradient><linearGradient id="v102"><stop offset="0.00" stop-color="#3e3e3e"/><stop offset="0.10" stop-color="#989898"/><stop offset="0.20" stop-color="#b2b2b2"/><stop offset="0.30" stop-color="#c0c0c0"/><stop offset="0.40" stop-color="#c8c8c8"/><stop offset="0.50" stop-color="#cccccc"/><stop offset="0.60" stop-color="#cbcbcb"/><stop offset="0.70" stop-color="#c6c6c6"/><stop offset="0.80" stop-color="#bbbbbb"/><stop offset="0.90" stop-color="#a6a6a6"/><stop offset="1.00" stop-color="#616161"/></linearGradient><linearGradient id="v103"><stop offset="0.00" stop-color="#3b3b3b"/><stop offset="0.10" stop-color="#989898"/><stop offset="0.20" stop-color="#b1b1b1"/><stop offset="0.30" stop-color="#bfbfbf"/><stop offset="0.40" stop-color="#c8c8c8"/><stop offset="0.50" stop-color="#cbcbcb"/><stop offset="0.60" stop-color="#cbcbcb"/><stop offset="0.70" stop-color="#c6c6c6"/><stop offset="0.80" stop-color="#bbbbbb"/><stop offset="0.90" stop-color="#a6a6a6"/><stop offset="1.00" stop-color="#636363"/></linearGradient><linearGradient id="v104"><stop offset="0.00" stop-color="#404040"/><stop offset="0.10" stop-color="#989898"/><stop offset="0.20" stop-color="#b1b1b1"/><stop offset="0.30" stop-color="#bfbfbf"/><stop offset="0.40" stop-color="#c8c8c8"/><stop offset="0.50" stop-color="#cbcbcb"/><stop offset="0.60" stop-color="#cacaca"/><stop offset="0.70" stop-color="#c5c5c5"/><stop offset="0.80" stop-color="#bbbbbb"/><stop offset="0.90" stop-color="#a6a6a6"/><stop offset="1.00" stop-color="#616161"/></linearGradient><linearGradient id="v105"><stop offset="0.00" stop-color="#373737"/><stop offset="0.10" stop-color="#989898"/><stop offset="0.20" stop-color="#b1b1b1"/><stop offset="0.30" stop-color="#bfbfbf"/><stop offset="0.40" stop-color="#c7c7c7"/><stop offset="0.50" stop-color="#cbcbcb"/><stop offset="0.60" stop-color="#cacaca"/><stop offset="0.70" stop-color="#c5c5c5"/><stop offset="0.80" stop-color="#bbbbbb"/><stop offset="0.90" stop-color="#a6a6a6"/><stop offset="1.00" stop-color="#616161"/></linearGradient><linearGradient id="v106"><stop offset="0.00" stop-color="#434343"/><stop offset="0.10" stop-color="#979797"/><stop offset="0.20" stop-color="#b1b1b1"/><stop offset="0.30" stop-color="#bfbfbf"/><stop offset="0.40" stop-color="#c7c7c7"/><stop offset="0.50" stop-color="#cacaca"/><stop offset="0.60" stop-color="#cacaca"/><stop offset="0.70" stop-color="#c5c5c5"/><stop offset="0.80" stop-color="#bababa"/><stop offset="0.90" stop-color="#a5a5a5"/><stop offset="1.00" stop-color="#626262"/></linearGradient><linearGradient id="v107"><stop offset="0.00" stop-color="#3a3a3a"/><stop offset="0.10" stop-color="#969696"/><stop offset="0.20" stop-color="#b0b0b0"/><stop offset="0.30" stop-color="#bfbfbf"/><stop offset="0.40" stop-color="#c7c7c7"/><stop offset="0.50" stop-color="#cacaca"/><stop offset="0.60" stop-color="#c9c9c9"/><stop offset="0.70" stop-color="#c4c4c4"/><stop offset="0.80" stop-color="#bababa"/><stop offset="0.90" stop-color="#a4a4a4"/><stop offset="1.00" stop-color="#5d5d5d"/></linearGradient><linearGradient id="v108"><stop offset="0.00" stop-color="#3f3f3f"/><stop offset="0.10" stop-color="#979797"/><stop offset="0.20" stop-color="#b0b0b0"/><stop offset="0.30" stop-color="#bfbfbf"/><stop offset="0.40" stop-color="#c6c6c6"/><stop offset="0.50" stop-color="#cacaca"/><stop offset="0.60" stop-color="#c9c9c9"/><stop offset="0.70" stop-color="#c4c4c4"/><stop offset="0.80" stop-color="#bababa"/><stop offset="0.90" stop-color="#a5a5a5"/><stop offset="1.00" stop-color="#646464"/></linearGradient><linearGradient id="v109"><stop offset="0.00" stop-color="#3d3d3d"/><stop offset="0.10" stop-color="#969696"/><stop offset="0.20" stop-color="#b0b0b0"/><stop offset="0.30" stop-color="#bebebe"/><stop offset="0.40" stop-color="#c6c6c6"/><stop offset="0.50" stop-color="#c9c9c9"/><stop offset="0.60" stop-color="#c9c9c9"/><stop offset="0.70" stop-color="#c4c4c4"/><stop offset="0.80" stop-color="#b9b9b9"/><stop offset="0.90" stop-color="#a5a5a5"/><stop offset="1.00" stop-color="#626262"/></linearGradient><linearGradient id="v110"><stop offset="0.00" stop-color="#3a3a3a"/><stop offset="0.10" stop-color="#969696"/><stop offset="0.20" stop-color="#b0b0b0"/><stop offset="0.30" stop-color="#bebebe"/><stop offset="0.40" stop-color="#c6c6c6"/><stop offset="0.50" stop-color="#c9c9c9"/><stop offset="0.60" stop-color="#c9c9c9"/><stop offset="0.70" stop-color="#c4c4c4"/><stop offset="0.80" stop-color="#b9b9b9"/><stop offset="0.90" stop-color="#a5a5a5"/><stop offset="1.00" stop-color="#616161"/></linearGradient><linearGradient id="v111"><stop offset="0.00" stop-color="#404040"/><stop offset="0.10" stop-color="#969696"/><stop offset="0.20" stop-color="#afafaf"/><stop offset="0.30" stop-color="#bdbdbd"/><stop offset="0.40" stop-color="#c5c5c5"/><stop offset="0.50" stop-color="#c9c9c9"/><stop offset="0.60" stop-color="#c8c8c8"/><stop offset="0.70" stop-color="#c3c3c3"/><stop offset="0.80" stop-color="#b9b9b9"/><stop offset="0.90" stop-color="#a5a5a5"/><stop offset="1.00" stop-color="#636363"/></linearGradient><linearGradient id="v112"><stop offset="0.00" stop-color="#373737"/><stop offset="0.10" stop-color="#969696"/><stop offset="0.20" stop-color="#afafaf"/><stop offset="0.30" stop-color="#bdbdbd"/><stop offset="0.40" stop-color="#c5c5c5"/><stop offset="0.50" stop-color="#c9c9c9"/><stop offset="0.60" stop-color="#c8c8c8"/><stop offset="0.70" stop-color="#c3c3c3"/><stop offset="0.80" stop-color="#b8b8b8"/><stop offset="0.90" stop-color="#a4a4a4"/><stop offset="1.00" stop-color="#5e5e5e"/></linearGradient><linearGradient id="v113"><stop offset="0.00" stop-color="#424242"/><stop offset="0.10" stop-color="#969696"/><stop offset="0.20" stop-color="#afafaf"/><stop offset="0.30" stop-color="#bdbdbd"/><stop offset="0.40" stop-color="#c5c5c5"/><stop offset="0.50" stop-color="#c8c8c8"/><stop offset="0.60" stop-color="#c8c8c8"/><stop offset="0.70" stop-color="#c3c3c3"/><stop offset="0.80" stop-color="#b9b9b9"/><stop offset="0.90" stop-color="#a5a5a5"/><stop offset="1.00" stop-color="#646464"/></linearGradient><linearGradient id="v114"><stop offset="0.00" stop-color="#3a3a3a"/><stop offset="0.10" stop-color="#969696"/><stop offset="0.20" stop-color="#afafaf"/><stop offset="0.30" stop-color="#bcbcbc"/><stop offset="0.40" stop-color="#c4c4c4"/><stop offset="0.50" stop-color="#c8c8c8"/><stop offset="0.60" stop-color="#c7c7c7"/><stop offset="0.70" stop-color="#c2c2c2"/><stop offset="0.80" stop-color="#b8b8b8"/><stop offset="0.90" stop-color="#a4a4a4"/><stop offset="1.00" stop-color="#5f5f5f"/></linearGradient><linearGradient id="v115"><stop offset="0.00" stop-color="#3e3e3e"/><stop offset="0.10" stop-color="#949494"/><stop offset="0.20" stop-color="#aeaeae"/><stop offset="0.30" stop-color="#bcbcbc"/><stop offset="0.40" stop-color="#c4c4c4"/><stop offset="0.50" stop-color="#c8c8c8"/><stop offset="0.60" stop-color="#c7c7c7"/><stop offset="0.70" stop-color="#c2c2c2"/><stop offset="0.80" stop-color="#b7b7b7"/><stop offset="0.90" stop-color="#a3a3a3"/><stop offset="1.00" stop-color="#626262"/></linearGradient><linearGradient id="v116"><stop offset="0.00" stop-color="#3d3d3d"/><stop offset="0.10" stop-color="#949494"/><stop offset="0.20" stop-color="#aeaeae"/><stop offset="0.30" stop-color="#bcbcbc"/><stop offset="0.40" stop-color="#c4c4c4"/><stop offset="0.50" stop-color="#c7c7c7"/><stop offset="0.60" stop-color="#c7c7c7"/><stop offset="0.70" stop-color="#c2c2c2"/><stop offset="0.80" stop-color="#b7b7b7"/><stop offset="0.90" stop-color="#a3a3a3"/><stop offset="1.00" stop-color="#5f5f5f"/></linearGradient><linearGradient id="v117"><stop offset="0.00" stop-color="#3e3e3e"/><stop offset="0.10" stop-color="#959595"/><stop offset="0.20" stop-color="#aeaeae"/><stop offset="0.30" stop-color="#bcbcbc"/><stop offset="0.40" stop-color="#c3c3c3"/><stop offset="0.50" stop-color="#c7c7c7"/><stop offset="0.60" stop-color="#c6c6c6"/><stop offset="0.70" stop-color="#c2c2c2"/><stop offset="0.80" stop-color="#b7b7b7"/><stop offset="0.90" stop-color="#a3a3a3"/><stop offset="1.00" stop-color="#626262"/></linearGradient><linearGradient id="v118"><stop offset="0.00" stop-color="#3f3f3f"/><stop offset="0.10" stop-color="#959595"/><stop offset="0.20" stop-color="#aeaeae"/><stop offset="0.30" stop-color="#bbbbbb"/><stop offset="0.40" stop-color="#c3c3c3"/><stop offset="0.50" stop-color="#c7c7c7"/><stop offset="0.60" stop-color="#c6c6c6"/><stop offset="0.70" stop-color="#c1c1c1"/><stop offset="0.80" stop-color="#b7b7b7"/><stop offset="0.90" stop-color="#a3a3a3"/><stop offset="1.00" stop-color="#626262"/></linearGradient><linearGradient id="v119"><stop offset="0.00" stop-color="#464646"/><stop offset="0.10" stop-color="#959595"/><stop offset="0.20" stop-color="#adadad"/><stop offset="0.30" stop-color="#bbbbbb"/><stop offset="0.40" stop-color="#c3c3c3"/><stop offset="0.50" stop-color="#c6c6c6"/><stop offset="0.60" stop-color="#c6c6c6"/><stop offset="0.70" stop-color="#c1c1c1"/><stop offset="0.80" stop-color="#b7b7b7"/><stop offset="0.90" stop-color="#a3a3a3"/><stop offset="1.00" stop-color="#666666"/></linearGradient><linearGradient id="v120"><stop offset="0.00" stop-color="#3f3f3f"/><stop offset="0.10" stop-color="#959595"/><stop offset="0.20" stop-color="#adadad"/><stop offset="0.30" stop-color="#bbbbbb"/><stop offset="0.40" stop-color="#c2c2c2"/><stop offset="0.50" stop-color="#c6c6c6"/><stop offset="0.60" stop-color="#c5c5c5"/><stop offset="0.70" stop-color="#c1c1c1"/><stop offset="0.80" stop-color="#b7b7b7"/><stop offset="0.90" stop-color="#a3a3a3"/><stop offset="1.00" stop-color="#656565"/></linearGradient><linearGradient id="v121"><stop offset="0.00" stop-color="#3f3f3f"/><stop offset="0.10" stop-color="#959595"/><stop offset="0.20" stop-color="#adadad"/><stop offset="0.30" stop-color="#bababa"/><stop offset="0.40" stop-color="#c2c2c2"/><stop offset="0.50" stop-color="#c5c5c5"/><stop offset="0.60" stop-color="#c5c5c5"/><stop offset="0.70" stop-color="#c0c0c0"/><stop offset="0.80" stop-color="#b6b6b6"/><stop offset="0.90" stop-color="#a3a3a3"/><stop offset="1.00" stop-color="#606060"/></linearGradient><linearGradient id="v122"><stop offset="0.00" stop-color="#3f3f3f"/><stop offset="0.10" stop-color="#949494"/><stop offset="0.20" stop-color="#acacac"/><stop offset="0.30" stop-color="#bababa"/><stop offset="0.40" stop-color="#c2c2c2"/><stop offset="0.50" stop-color="#c5c5c5"/><stop offset="0.60" stop-color="#c5c5c5"/><stop offset="0.70" stop-color="#c0c0c0"/><stop offset="0.80" stop-color="#b6b6b6"/><stop offset="0.90" stop-color="#a2a2a2"/><stop offset="1.00" stop-color="#616161"/></linearGradient><linearGradient id="v123"><stop offset="0.00" stop-color="#404040"/><stop offset="0.10" stop-color="#949494"/><stop offset="0.20" stop-color="#acacac"/><stop offset="0.30" stop-color="#bababa"/><stop offset="0.40" stop-color="#c1c1c1"/><stop offset="0.50" stop-color="#c5c5c5"/><stop offset="0.60" stop-color="#c4c4c4"/><stop offset="0.70" stop-color="#c0c0c0"/><stop offset="0.80" stop-color="#b6b6b6"/><stop offset="0.90" stop-color="#a2a2a2"/><stop offset="1.00" stop-color="#646464"/></linearGradient><linearGradient id="v124"><stop offset="0.00" stop-color="#3f3f3f"/><stop offset="0.10" stop-color="#949494"/><stop offset="0.20" stop-color="#acacac"/><stop offset="0.30" stop-color="#bababa"/><stop offset="0.40" stop-color="#c1c1c1"/><stop offset="0.50" stop-color="#c4c4c4"/><stop offset="0.60" stop-color="#c4c4c4"/><stop offset="0.70" stop-color="#bfbfbf"/><stop offset="0.80" stop-color="#b6b6b6"/><stop offset="0.90" stop-color="#a2a2a2"/><stop offset="1.00" stop-color="#646464"/></linearGradient><linearGradient id="v125"><stop offset="0.00" stop-color="#3f3f3f"/><stop offset="0.10" stop-color="#949494"/><stop offset="0.20" stop-color="#acacac"/><stop offset="0.30" stop-color="#b9b9b9"/><stop offset="0.40" stop-color="#c1c1c1"/><stop offset="0.50" stop-color="#c4c4c4"/><stop offset="0.60" stop-color="#c4c4c4"/><stop offset="0.70" stop-color="#bfbfbf"/><stop offset="0.80" stop-color="#b5b5b5"/><stop offset="0.90" stop-color="#a2a2a2"/><stop offset="1.00" stop-color="#646464"/></linearGradient><linearGradient id="v126"><stop offset="0.00" stop-color="#3f3f3f"/><stop offset="0.10" stop-color="#949494"/><stop offset="0.20" stop-color="#ababab"/><stop offset="0.30" stop-color="#b9b9b9"/><stop offset="0.40" stop-color="#c0c0c0"/><stop offset="0.50" stop-color="#c4c4c4"/><stop offset="0.60" stop-color="#c3c3c3"/><stop offset="0.70" stop-color="#bfbfbf"/><stop offset="0.80" stop-color="#b5b5b5"/><stop offset="0.90" stop-color="#a2a2a2"/><stop offset="1.00" stop-color="#5f5f5f"/></linearGradient><linearGradient id="v127"><stop offset="0.00" stop-color="#404040"/><stop offset="0.10" stop-color="#949494"/><stop offset="0.20" stop-color="#ababab"/><stop offset="0.30" stop-color="#b9b9b9"/><stop offset="0.40" stop-color="#c0c0c0"/><stop offset="0.50" stop-color="#c3c3c3"/><stop offset="0.60" stop-color="#c3c3c3"/><stop offset="0.70" stop-color="#bebebe"/><stop offset="0.80" stop-color="#b5b5b5"/><stop offset="0.90" stop-color="#a2a2a2"/><stop offset="1.00" stop-color="#636363"/></linearGradient><linearGradient id="v128"><stop offset="0.00" stop-color="#3f3f3f"/><stop offset="0.10" stop-color="#939393"/><stop offset="0.20" stop-color="#ababab"/><stop offset="0.30" stop-color="#b8b8b8"/><stop offset="0.40" stop-color="#c0c0c0"/><stop offset="0.50" stop-color="#c3c3c3"/><stop offset="0.60" stop-color="#c2c2c2"/><stop offset="0.70" stop-color="#bebebe"/><stop offset="0.80" stop-color="#b4b4b4"/><stop offset="0.90" stop-color="#a1a1a1"/><stop offset="1.00" stop-color="#626262"/></linearGradient><linearGradient id="v129"><stop offset="0.00" stop-color="#3f3f3f"/><stop offset="0.10" stop-color="#929292"/><stop offset="0.20" stop-color="#aaaaaa"/><stop offset="0.30" stop-color="#b8b8b8"/><stop offset="0.40" stop-color="#bfbfbf"/><stop offset="0.50" stop-color="#c3c3c3"/><stop offset="0.60" stop-color="#c2c2c2"/><stop offset="0.70" stop-color="#bebebe"/><stop offset="0.80" stop-color="#b4b4b4"/><stop offset="0.90" stop-color="#a0a0a0"/><stop offset="1.00" stop-color="#626262"/></linearGradient><linearGradient id="v130"><stop offset="0.00" stop-color="#3f3f3f"/><stop offset="0.10" stop-color="#929292"/><stop offset="0.20" stop-color="#aaaaaa"/><stop offset="0.30" stop-color="#b8b8b8"/><stop offset="0.40" stop-color="#bfbfbf"/><stop offset="0.50" stop-color="#c2c2c2"/><stop offset="0.60" stop-color="#c2c2c2"/><stop offset="0.70" stop-color="#bdbdbd"/><stop offset="0.80" stop-color="#b4b4b4"/><stop offset="0.90" stop-color="#a0a0a0"/><stop offset="1.00" stop-color="#626262"/></linearGradient><linearGradient id="v131"><stop offset="0.00" stop-color="#414141"/><stop offset="0.10" stop-color="#929292"/><stop offset="0.20" stop-color="#aaaaaa"/><stop offset="0.30" stop-color="#b7b7b7"/><stop offset="0.40" stop-color="#bfbfbf"/><stop offset="0.50" stop-color="#c2c2c2"/><stop offset="0.60" stop-color="#c1c1c1"/><stop offset="0.70" stop-color="#bdbdbd"/><stop offset="0.80" stop-color="#b3b3b3"/><stop offset="0.90" stop-color="#a0a0a0"/><stop offset="1.00" stop-color="#626262"/></linearGradient><linearGradient id="v132"><stop offset="0.00" stop-color="#404040"/><stop offset="0.10" stop-color="#929292"/><stop offset="0.20" stop-color="#a9a9a9"/><stop offset="0.30" stop-color="#b7b7b7"/><stop offset="0.40" stop-color="#bebebe"/><stop offset="0.50" stop-color="#c1c1c1"/><stop offset="0.60" stop-color="#c1c1c1"/><stop offset="0.70" stop-color="#bdbdbd"/><stop offset="0.80" stop-color="#b3b3b3"/><stop offset="0.90" stop-color="#a0a0a0"/><stop offset="1.00" stop-color="#616161"/></linearGradient><linearGradient id="v133"><stop offset="0.00" stop-color="#383838"/><stop offset="0.10" stop-color="#929292"/><stop offset="0.20" stop-color="#a9a9a9"/><stop offset="0.30" stop-color="#b6b6b6"/><stop offset="0.40" stop-color="#bebebe"/><stop offset="0.50" stop-color="#c1c1c1"/><stop offset="0.60" stop-color="#c1c1c1"/><stop offset="0.70" stop-color="#bcbcbc"/><stop offset="0.80" stop-color="#b3b3b3"/><stop offset="0.90" stop-color="#a0a0a0"/><stop offset="1.00" stop-color="#5f5f5f"/></linearGradient><linearGradient id="v134"><stop offset="0.00" stop-color="#373737"/><stop offset="0.10" stop-color="#929292"/><stop offset="0.20" stop-color="#a9a9a9"/><stop offset="0.30" stop-color="#b6b6b6"/><stop offset="0.40" stop-color="#bdbdbd"/><stop offset="0.50" stop-color="#c1c1c1"/><stop offset="0.60" stop-color="#c0c0c0"/><stop offset="0.70" stop-color="#bcbcbc"/><stop offset="0.80" stop-color="#b2b2b2"/><stop offset="0.90" stop-color="#a0a0a0"/><stop offset="1.00" stop-color="#5a5a5a"/></linearGradient><linearGradient id="v135"><stop offset="0.00" stop-color="#313131"/><stop offset="0.10" stop-color="#909090"/><stop offset="0.20" stop-color="#a8a8a8"/><stop offset="0.30" stop-color="#b6b6b6"/><stop offset="0.40" stop-color="#bdbdbd"/><stop offset="0.50" stop-color="#c0c0c0"/><stop offset="0.60" stop-color="#c0c0c0"/><stop offset="0.70" stop-color="#bbbbbb"/><stop offset="0.80" stop-color="#b2b2b2"/><stop offset="0.90" stop-color="#9f9f9f"/><stop offset="1.00" stop-color="#545454"/></linearGradient><linearGradient id="v136"><stop offset="0.00" stop-color="#2b2b2b"/><stop offset="0.10" stop-color="#909090"/><stop offset="0.20" stop-color="#a8a8a8"/><stop offset="0.30" stop-color="#b5b5b5"/><stop offset="0.40" stop-color="#bdbdbd"/><stop offset="0.50" stop-color="#c0c0c0"/><stop offset="0.60" stop-color="#bfbfbf"/><stop offset="0.70" stop-color="#bbbbbb"/><stop offset="0.80" stop-color="#b2b2b2"/><stop offset="0.90" stop-color="#9f9f9f"/><stop offset="1.00" stop-color="#525252"/></linearGradient><linearGradient id="v137"><stop offset="0.00" stop-color="#262626"/><stop offset="0.10" stop-color="#909090"/><stop offset="0.20" stop-color="#a8a8a8"/><stop offset="0.30" stop-color="#b5b5b5"/><stop offset="0.40" stop-color="#bcbcbc"/><stop offset="0.50" stop-color="#bfbfbf"/><stop offset="0.60" stop-color="#bfbfbf"/><stop offset="0.70" stop-color="#bbbbbb"/><stop offset="0.80" stop-color="#b1b1b1"/><stop offset="0.90" stop-color="#9e9e9e"/><stop offset="1.00" stop-color="#494949"/></linearGradient><linearGradient id="v138"><stop offset="0.00" stop-color="#262626"/><stop offset="0.10" stop-color="#8e8e8e"/><stop offset="0.20" stop-color="#a7a7a7"/><stop offset="0.30" stop-color="#b5b5b5"/><stop offset="0.40" stop-color="#bcbcbc"/><stop offset="0.50" stop-color="#bfbfbf"/><stop offset="0.60" stop-color="#bfbfbf"/><stop offset="0.70" stop-color="#bababa"/><stop offset="0.80" stop-color="#b1b1b1"/><stop offset="0.90" stop-color="#9d9d9d"/><stop offset="1.00" stop-color="#3b3b3b"/></linearGradient><linearGradient id="v139"><stop offset="0.00" stop-color="#262626"/><stop offset="0.10" stop-color="#898989"/><stop offset="0.20" stop-color="#a7a7a7"/><stop offset="0.30" stop-color="#b4b4b4"/><stop offset="0.40" stop-color="#bcbcbc"/><stop offset="0.50" stop-color="#bfbfbf"/><stop offset="0.60" stop-color="#bebebe"/><stop offset="0.70" stop-color="#bababa"/><stop offset="0.80" stop-color="#b0b0b0"/><stop offset="0.90" stop-color="#989898"/><stop offset="1.00" stop-color="#323232"/></linearGradient><linearGradient id="v140"><stop offset="0.00" stop-color="#262626"/><stop offset="0.10" stop-color="#848484"/><stop offset="0.20" stop-color="#a5a5a5"/><stop offset="0.30" stop-color="#b4b4b4"/><stop offset="0.40" stop-color="#bbbbbb"/><stop offset="0.50" stop-color="#bebebe"/><stop offset="0.60" stop-color="#bebebe"/><stop offset="0.70" stop-color="#bababa"/><stop offset="0.80" stop-color="#afafaf"/><stop offset="0.90" stop-color="#949494"/><stop offset="1.00" stop-color="#2e2e2e"/></linearGradient><linearGradient id="v141"><stop offset="0.00" stop-color="#262626"/><stop offset="0.10" stop-color="#7d7d7d"/><stop offset="0.20" stop-color="#9f9f9f"/><stop offset="0.30" stop-color="#b2b2b2"/><stop offset="0.40" stop-color="#bbbbbb"/><stop offset="0.50" stop-color="#bebebe"/><stop offset="0.60" stop-color="#bdbdbd"/><stop offset="0.70" stop-color="#b8b8b8"/><stop offset="0.80" stop-color="#aaaaaa"/><stop offset="0.90" stop-color="#8d8d8d"/><stop offset="1.00" stop-color="#282828"/></linearGradient><linearGradient id="v142"><stop offset="0.00" stop-color="#262626"/><stop offset="0.10" stop-color="#797979"/><stop offset="0.20" stop-color="#9b9b9b"/><stop offset="0.30" stop-color="#adadad"/><stop offset="0.40" stop-color="#b7b7b7"/><stop offset="0.50" stop-color="#bbbbbb"/><stop offset="0.60" stop-color="#bababa"/><stop offset="0.70" stop-color="#b3b3b3"/><stop offset="0.80" stop-color="#a5a5a5"/><stop offset="0.90" stop-color="#888888"/><stop offset="1.00" stop-color="#272727"/></linearGradient><linearGradient id="v143"><stop offset="0.00" stop-color="#262626"/><stop offset="0.10" stop-color="#767676"/><stop offset="0.20" stop-color="#969696"/><stop offset="0.30" stop-color="#a8a8a8"/><stop offset="0.40" stop-color="#b2b2b2"/><stop offset="0.50" stop-color="#b6b6b6"/><stop offset="0.60" stop-color="#b4b4b4"/><stop offset="0.70" stop-color="#aeaeae"/><stop offset="0.80" stop-color="#9f9f9f"/><stop offset="0.90" stop-color="#858585"/><stop offset="1.00" stop-color="#2b2b2b"/></linearGradient><linearGradient id="v144"><stop offset="0.00" stop-color="#262626"/><stop offset="0.10" stop-color="#747474"/><stop offset="0.20" stop-color="#929292"/><stop offset="0.30" stop-color="#a3a3a3"/><stop offset="0.40" stop-color="#acacac"/><stop offset="0.50" stop-color="#b0b0b0"/><stop offset="0.60" stop-color="#afafaf"/><stop offset="0.70" stop-color="#a8a8a8"/><stop offset="0.80" stop-color="#9b9b9b"/><stop offset="0.90" stop-color="#818181"/><stop offset="1.00" stop-color="#383838"/></linearGradient><linearGradient id="v145"><stop offset="0.00" stop-color="#313131"/><stop offset="0.10" stop-color="#747474"/><stop offset="0.20" stop-color="#8f8f8f"/><stop offset="0.30" stop-color="#9e9e9e"/><stop offset="0.40" stop-color="#a7a7a7"/><stop offset="0.50" stop-color="#aaaaaa"/><stop offset="0.60" stop-color="#a9a9a9"/><stop offset="0.70" stop-color="#a3a3a3"/><stop offset="0.80" stop-color="#979797"/><stop offset="0.90" stop-color="#7f7f7f"/><stop offset="1.00" stop-color="#494949"/></linearGradient><linearGradient id="v146"><stop offset="0.00" stop-color="#434343"/><stop offset="0.10" stop-color="#737373"/><stop offset="0.20" stop-color="#8b8b8b"/><stop offset="0.30" stop-color="#999999"/><stop offset="0.40" stop-color="#a1a1a1"/><stop offset="0.50" stop-color="#a4a4a4"/><stop offset="0.60" stop-color="#a3a3a3"/><stop offset="0.70" stop-color="#9e9e9e"/><stop offset="0.80" stop-color="#929292"/><stop offset="0.90" stop-color="#7e7e7e"/><stop offset="1.00" stop-color="#555555"/></linearGradient><linearGradient id="v147"><stop offset="0.00" stop-color="#545454"/><stop offset="0.10" stop-color="#757575"/><stop offset="0.20" stop-color="#888888"/><stop offset="0.30" stop-color="#949494"/><stop offset="0.40" stop-color="#9b9b9b"/><stop offset="0.50" stop-color="#9e9e9e"/><stop offset="0.60" stop-color="#9d9d9d"/><stop offset="0.70" stop-color="#989898"/><stop offset="0.80" stop-color="#8f8f8f"/><stop offset="0.90" stop-color="#7e7e7e"/><stop offset="1.00" stop-color="#616161"/></linearGradient><linearGradient id="v148"><stop offset="0.00" stop-color="#606060"/><stop offset="0.10" stop-color="#777777"/><stop offset="0.20" stop-color="#868686"/><stop offset="0.30" stop-color="#8f8f8f"/><stop offset="0.40" stop-color="#959595"/><stop offset="0.50" stop-color="#979797"/><stop offset="0.60" stop-color="#979797"/><stop offset="0.70" stop-color="#939393"/><stop offset="0.80" stop-color="#8c8c8c"/><stop offset="0.90" stop-color="#7f7f7f"/><stop offset="1.00" stop-color="#6c6c6c"/></linearGradient><linearGradient id="v149"><stop offset="0.00" stop-color="#6c6c6c"/><stop offset="0.10" stop-color="#7a7a7a"/><stop offset="0.20" stop-color="#848484"/><stop offset="0.30" stop-color="#8b8b8b"/><stop offset="0.40" stop-color="#8f8f8f"/><stop offset="0.50" stop-color="#909090"/><stop offset="0.60" stop-color="#909090"/><stop offset="0.70" stop-color="#8d8d8d"/><stop offset="0.80" stop-color="#888888"/><stop offset="0.90" stop-color="#808080"/><stop offset="1.00" stop-color="#747474"/></linearGradient><linearGradient id="v150"><stop offset="0.00" stop-color="#777777"/><stop offset="0.10" stop-color="#7d7d7d"/><stop offset="0.20" stop-color="#828282"/><stop offset="0.30" stop-color="#868686"/><stop offset="0.40" stop-color="#888888"/><stop offset="0.50" stop-color="#898989"/><stop offset="0.60" stop-color="#898989"/><stop offset="0.70" stop-color="#888888"/><stop offset="0.80" stop-color="#858585"/><stop offset="0.90" stop-color="#818181"/><stop offset="1.00" stop-color="#7c7c7c"/></linearGradient><linearGradient id="v151"><stop offset="0.00" stop-color="#7f7f7f"/><stop offset="0.10" stop-color="#818181"/><stop offset="0.20" stop-color="#828282"/><stop offset="0.30" stop-color="#838383"/><stop offset="0.40" stop-color="#838383"/><stop offset="0.50" stop-color="#848484"/><stop offset="0.60" stop-color="#848484"/><stop offset="0.70" stop-color="#848484"/><stop offset="0.80" stop-color="#838383"/><stop offset="0.90" stop-color="#828282"/><stop offset="1.00" stop-color="#828282"/></linearGradient></defs><rect x="499.55" y="397" width="19.00" height="1" fill="url(#v18)" fill-opacity="0.25"/><rect x="492.11" y="398" width="33.56" height="1" fill="url(#v19)"/><rect x="487.55" y="399" width="42.38" height="1" fill="url(#v20)"/><rect x="487.05" y="400" width="43.25" height="1" fill="url(#v21)"/><rect x="487.05" y="401" width="43.25" height="1" fill="url(#v22)"/><rect x="487.05" y="402" width="43.25" height="1" fill="url(#v23)"/><rect x="487.05" y="403" width="43.25" height="1" fill="url(#v24)"/><rect x="487.05" y="404" width="43.25" height="1" fill="url(#v25)"/><rect x="487.05" y="405" width="43.25" height="1" fill="url(#v26)"/><rect x="487.05" y="406" width="43.25" height="1" fill="url(#v27)"/><rect x="487.05" y="407" width="43.25" height="1" fill="url(#v28)"/><rect x="487.05" y="408" width="43.00" height="1" fill="url(#v29)"/><rect x="487.05" y="409" width="43.00" height="1" fill="url(#v30)"/><rect x="487.05" y="410" width="43.00" height="1" fill="url(#v31)"/><rect x="486.80" y="411" width="43.62" height="1" fill="url(#v32)"/><rect x="485.36" y="412" width="46.69" height="1" fill="url(#v33)"/><rect x="483.61" y="413" width="50.19" height="1" fill="url(#v34)"/><rect x="482.18" y="414" width="53.00" height="1" fill="url(#v35)"/><rect x="481.18" y="415" width="55.00" height="1" fill="url(#v36)"/><rect x="480.18" y="416" width="57.00" height="1" fill="url(#v37)"/><rect x="479.18" y="417" width="59.00" height="1" fill="url(#v38)"/><rect x="478.18" y="418" width="61.00" height="1" fill="url(#v39)"/><rect x="477.36" y="419" width="62.69" height="1" fill="url(#v40)"/><rect x="476.93" y="420" width="63.50" height="1" fill="url(#v41)"/><rect x="476.43" y="421" width="64.50" height="1" fill="url(#v42)"/><rect x="475.93" y="422" width="65.50" height="1" fill="url(#v43)"/><rect x="475.43" y="423" width="66.50" height="1" fill="url(#v44)"/><rect x="474.93" y="424" width="67.50" height="1" fill="url(#v45)"/><rect x="474.61" y="425" width="68.12" height="1" fill="url(#v46)"/><rect x="474.49" y="426" width="68.38" height="1" fill="url(#v47)"/><rect x="474.30" y="427" width="68.75" height="1" fill="url(#v48)"/><rect x="474.05" y="428" width="69.25" height="1" fill="url(#v49)"/><rect x="473.86" y="429" width="69.62" height="1" fill="url(#v50)"/><rect x="473.68" y="430" width="70.00" height="1" fill="url(#v51)"/><rect x="473.55" y="431" width="70.25" height="1" fill="url(#v52)"/><rect x="473.55" y="432" width="70.25" height="1" fill="url(#v53)"/><rect x="473.55" y="433" width="70.25" height="1" fill="url(#v54)"/><rect x="473.55" y="434" width="70.25" height="1" fill="url(#v55)"/><rect x="473.55" y="435" width="70.25" height="1" fill="url(#v56)"/><rect x="473.55" y="436" width="70.25" height="1" fill="url(#v57)"/><rect x="473.55" y="437" width="70.25" height="1" fill="url(#v58)"/><rect x="473.74" y="438" width="69.81" height="1" fill="url(#v59)"/><rect x="473.80" y="439" width="69.75" height="1" fill="url(#v60)"/><rect x="473.80" y="440" width="69.75" height="1" fill="url(#v61)"/><rect x="473.80" y="441" width="69.75" height="1" fill="url(#v62)"/><rect x="473.80" y="442" width="69.75" height="1" fill="url(#v63)"/><rect x="473.80" y="443" width="69.75" height="1" fill="url(#v64)"/><rect x="473.93" y="444" width="69.44" height="1" fill="url(#v65)"/><rect x="474.05" y="445" width="69.25" height="1" fill="url(#v66)"/><rect x="474.24" y="446" width="68.81" height="1" fill="url(#v67)"/><rect x="474.30" y="447" width="68.69" height="1" fill="url(#v68)"/><rect x="474.55" y="448" width="68.25" height="1" fill="url(#v69)"/><rect x="474.61" y="449" width="68.06" height="1" fill="url(#v70)"/><rect x="474.80" y="450" width="67.75" height="1" fill="url(#v71)"/><rect x="474.93" y="451" width="67.44" height="1" fill="url(#v72)"/><rect x="475.05" y="452" width="67.25" height="1" fill="url(#v73)"/><rect x="475.24" y="453" width="66.81" height="1" fill="url(#v74)"/><rect x="475.30" y="454" width="66.62" height="1" fill="url(#v75)"/><rect x="475.55" y="455" width="66.25" height="1" fill="url(#v76)"/><rect x="475.61" y="456" width="66.00" height="1" fill="url(#v77)"/><rect x="475.80" y="457" width="65.75" height="1" fill="url(#v78)"/><rect x="475.93" y="458" width="65.38" height="1" fill="url(#v79)"/><rect x="476.05" y="459" width="65.19" height="1" fill="url(#v80)"/><rect x="476.24" y="460" width="64.81" height="1" fill="url(#v81)"/><rect x="476.30" y="461" width="64.62" height="1" fill="url(#v82)"/><rect x="476.55" y="462" width="64.25" height="1" fill="url(#v83)"/><rect x="476.61" y="463" width="63.94" height="1" fill="url(#v84)"/><rect x="476.80" y="464" width="63.69" height="1" fill="url(#v85)"/><rect x="476.93" y="465" width="63.38" height="1" fill="url(#v86)"/><rect x="477.05" y="466" width="63.12" height="1" fill="url(#v87)"/><rect x="477.18" y="467" width="62.88" height="1" fill="url(#v88)"/><rect x="477.30" y="468" width="62.56" height="1" fill="url(#v89)"/><rect x="477.49" y="469" width="62.31" height="1" fill="url(#v90)"/><rect x="477.55" y="470" width="62.00" height="1" fill="url(#v91)"/><rect x="477.80" y="471" width="61.62" height="1" fill="url(#v92)"/><rect x="477.86" y="472" width="61.44" height="1" fill="url(#v93)"/><rect x="478.05" y="473" width="61.06" height="1" fill="url(#v94)"/><rect x="478.18" y="474" width="60.88" height="1" fill="url(#v95)"/><rect x="478.30" y="475" width="60.50" height="1" fill="url(#v96)"/><rect x="478.49" y="476" width="60.25" height="1" fill="url(#v97)"/><rect x="478.55" y="477" width="60.00" height="1" fill="url(#v98)"/><rect x="478.80" y="478" width="59.62" height="1" fill="url(#v99)"/><rect x="478.86" y="479" width="59.44" height="1" fill="url(#v100)"/><rect x="479.05" y="480" width="59.00" height="1" fill="url(#v101)"/><rect x="479.18" y="481" width="58.81" height="1" fill="url(#v102)"/><rect x="479.30" y="482" width="58.50" height="1" fill="url(#v103)"/><rect x="479.49" y="483" width="58.19" height="1" fill="url(#v104)"/><rect x="479.55" y="484" width="58.00" height="1" fill="url(#v105)"/><rect x="479.80" y="485" width="57.56" height="1" fill="url(#v106)"/><rect x="479.86" y="486" width="57.44" height="1" fill="url(#v107)"/><rect x="480.05" y="487" width="57.00" height="1" fill="url(#v108)"/><rect x="480.18" y="488" width="56.75" height="1" fill="url(#v109)"/><rect x="480.30" y="489" width="56.50" height="1" fill="url(#v110)"/><rect x="480.49" y="490" width="56.12" height="1" fill="url(#v111)"/><rect x="480.55" y="491" width="56.00" height="1" fill="url(#v112)"/><rect x="480.80" y="492" width="55.50" height="1" fill="url(#v113)"/><rect x="480.86" y="493" width="55.38" height="1" fill="url(#v114)"/><rect x="481.05" y="494" width="55.00" height="1" fill="url(#v115)"/><rect x="481.18" y="495" width="54.75" height="1" fill="url(#v116)"/><rect x="481.36" y="496" width="54.38" height="1" fill="url(#v117)"/><rect x="481.55" y="497" width="54.00" height="1" fill="url(#v118)"/><rect x="481.80" y="498" width="53.50" height="1" fill="url(#v119)"/><rect x="481.93" y="499" width="53.19" height="1" fill="url(#v120)"/><rect x="482.11" y="500" width="52.88" height="1" fill="url(#v121)"/><rect x="482.30" y="501" width="52.50" height="1" fill="url(#v122)"/><rect x="482.49" y="502" width="52.06" height="1" fill="url(#v123)"/><rect x="482.68" y="503" width="51.69" height="1" fill="url(#v124)"/><rect x="482.86" y="504" width="51.31" height="1" fill="url(#v125)"/><rect x="483.05" y="505" width="51.00" height="1" fill="url(#v126)"/><rect x="483.24" y="506" width="50.56" height="1" fill="url(#v127)"/><rect x="483.43" y="507" width="50.19" height="1" fill="url(#v128)"/><rect x="483.61" y="508" width="49.81" height="1" fill="url(#v129)"/><rect x="483.80" y="509" width="49.44" height="1" fill="url(#v130)"/><rect x="483.99" y="510" width="49.06" height="1" fill="url(#v131)"/><rect x="484.18" y="511" width="48.69" height="1" fill="url(#v132)"/><rect x="484.30" y="512" width="48.38" height="1" fill="url(#v133)"/><rect x="484.55" y="513" width="47.94" height="1" fill="url(#v134)"/><rect x="484.74" y="514" width="47.56" height="1" fill="url(#v135)"/><rect x="484.93" y="515" width="47.12" height="1" fill="url(#v136)"/><rect x="485.05" y="516" width="46.81" height="1" fill="url(#v137)"/><rect x="485.30" y="517" width="46.44" height="1" fill="url(#v138)"/><rect x="485.49" y="518" width="46.06" height="1" fill="url(#v139)"/><rect x="485.68" y="519" width="45.62" height="1" fill="url(#v140)"/><rect x="485.86" y="520" width="45.25" height="1" fill="url(#v141)"/><rect x="486.30" y="521" width="44.50" height="1" fill="url(#v142)"/><rect x="486.80" y="522" width="43.50" height="1" fill="url(#v143)"/><rect x="487.68" y="523" width="41.94" height="1" fill="url(#v144)"/><rect x="488.68" y="524" width="40.00" height="1" fill="url(#v145)"/><rect x="489.80" y="525" width="37.75" height="1" fill="url(#v146)"/><rect x="491.43" y="526" width="34.56" height="1" fill="url(#v147)"/><rect x="493.36" y="527" width="30.69" height="1" fill="url(#v148)"/><rect x="495.93" y="528" width="25.75" height="1" fill="url(#v149)"/><rect x="499.68" y="529" width="18.31" height="1" fill="url(#v150)"/><rect x="504.55" y="530" width="8.62" height="1" fill="url(#v151)" fill-opacity="0.50"/>
</g>
<g clip-path="url(#cbl)"><text transform="translate(232,343.2) scale(1.14,1)" font-family="Liberation Sans, sans-serif" font-weight="bold" font-size="35" fill="#000" fill-opacity="0.17" stroke="#000" stroke-opacity="0.17" stroke-width="0.4">© Severinka</text></g><g clip-path="url(#cbr)"><text transform="translate(232,343.2) scale(1.14,1)" font-family="Liberation Sans, sans-serif" font-weight="bold" font-size="35" fill="#000" fill-opacity="0.17" stroke="#000" stroke-opacity="0.17" stroke-width="0.4">© Severinka</text></g>
</svg>
<div class="a" style="left:670px;top:39px;width:122px;height:535px;background:#e9e7ec;border-left:1px solid #c9c9cf"></div>
<div class="a" style="left:670px;top:51px;width:121px;height:522px;border:1px solid #b8bcc8;border-left-color:#f8f8fa;border-right:1.5px solid #bcbcc4;border-bottom:2px solid #bdbcc4;background:#eae8ee"></div>
<div class="a" style="left:680px;top:267px;width:1px;height:303px;background:#e2e0e6"></div>
<div class="a" style="left:697px;top:40px;width:27px;height:12px;border:1px solid #aab8d0;border-bottom:none;background:linear-gradient(#fbfbfc,#e2e6ee)"></div>
<div class="a" style="left:724px;top:40px;width:33px;height:12px;border:1px solid #aab8d0;border-bottom:none;background:linear-gradient(#fbfbfc,#e2e6ee)"></div>
<div class="a" style="left:757px;top:40px;width:26px;height:12px;border:1px solid #aab8d0;border-bottom:none;background:linear-gradient(#fbfbfc,#e2e6ee)"></div>
<div class="a" style="left:670px;top:38px;width:27px;height:14px;border:1px solid #98a8c4;border-top:2px solid #f0a030;border-bottom:none;background:#fbfbfb"></div>
<div class="lbl" style="left:674.0px;top:41.5px">Model</div>
<div class="lbl" style="left:700.5px;top:43.0px">Groups</div>
<div class="lbl" style="left:728.0px;top:43.0px">Materials</div>
<div class="lbl" style="left:760.5px;top:43.0px">Joints</div>
<div class="a" style="left:675px;top:57px;width:110px;height:149px;border:1px solid #d4d2da;border-radius:3px"></div>
<div class="a" style="left:677px;top:53px;width:18px;height:8px;background:#eae8ee"></div>
<div class="lbl" style="left:678px;top:54px;color:#6680b2">Tools</div>
<div class="a" style="left:675px;top:214px;width:110px;height:50px;border:1px solid #d4d2da;border-radius:3px"></div>
<div class="a" style="left:677px;top:209px;width:43px;height:8px;background:#eae8ee"></div>
<div class="lbl" style="left:678px;top:210.5px;color:#6680b2">Select Options</div>
<div class="btn p" style="left:679px;top:66.0px;width:48px">Select</div>
<div class="btn" style="left:731px;top:66.0px;width:48px">Move</div>
<div class="btn" style="left:679px;top:78.0px;width:48px">Rotate</div>
<div class="btn" style="left:731px;top:78.0px;width:48px">Scale</div>
<div class="btn" style="left:679px;top:94.0px;width:48px">Vertex</div>
<div class="btn" style="left:731px;top:94.0px;width:48px">Face</div>
<div class="btn" style="left:679px;top:106.0px;width:48px">Sphere</div>
<div class="btn" style="left:731px;top:106.0px;width:48px">GeoSphere</div>
<div class="btn" style="left:679px;top:118.0px;width:48px">Box</div>
<div class="btn" style="left:731px;top:118.0px;width:48px">Cylinder</div>
<div class="btn" style="left:679px;top:130.5px;width:48px">Plane</div>
<div class="btn" style="left:679px;top:145.5px;width:48px">Extrude</div>
<div class="btn" style="left:731px;top:145.5px;width:48px">Joint</div>
<div class="btn" style="left:679px;top:164.5px;width:48px;border:1px solid #7d8cab;background:linear-gradient(#fbfbfd,#eef0f6 45%,#c8d0e2)">Comment</div>
<div class="chk" style="left:678px;top:178.5px"></div><svg class="a" style="left:679px;top:179.5px" width="7" height="7"><path d="M1 3.5L2.8 5.5L6 1.2" stroke="#22a022" stroke-width="1.5" fill="none"/></svg>
<div class="lbl" style="left:688px;top:178.5px">Redraw All Viewports</div>
<div class="chk" style="left:678px;top:190px"></div><div class="lbl" style="left:688px;top:190.5px">Auto Tool</div>
<div class="chk" style="left:727px;top:190px"></div><div class="lbl" style="left:737.5px;top:190.5px">Snap To Grid</div>
<div class="btn p" style="left:679.0px;top:219.5px;width:22px">Vertex</div>
<div class="btn" style="left:704.5px;top:219.5px;width:22px;border-width:1.5px;background:linear-gradient(#eef2f8,#d4ddee 45%,#8fa4cc)">Face</div>
<div class="btn" style="left:730.0px;top:219.5px;width:22px;border-width:1.5px;background:linear-gradient(#eef2f8,#d4ddee 45%,#8fa4cc)">Group</div>
<div class="btn" style="left:756.0px;top:219.5px;width:22px;border-width:1.5px;background:linear-gradient(#eef2f8,#d4ddee 45%,#8fa4cc)">Joint</div>
<div class="chk" style="left:678px;top:236px"></div><div class="lbl" style="left:688px;top:236.5px">Ignore Backfaces</div>
<div class="chk" style="left:678px;top:248px;border-color:#cdd0d8;background:#efeff1"></div><svg class="a" style="left:679px;top:249px" width="7" height="7"><path d="M1 3.5L2.8 5.5L6 1.2" stroke="#c8c8cc" stroke-width="1.4" fill="none"/></svg>
<div class="lbl" style="left:688px;top:248.5px;color:#b8b8bc">By Vertex</div>
<div class="a" style="left:8px;top:574px;width:662px;height:26px;background:#ebeaee;border-top:1px solid #d0d0d6;border-bottom:1px solid #d8d8dc"></div>
<div class="a" style="left:18px;top:581px;width:645px;height:3px;background:#f2f2ec;border-top:1px solid #c4c4bc"></div>
<svg class="a" style="left:0;top:0" width="800" height="622"><path d="M18.0 592v3M40.1 592v3M62.2 592v3M84.4 592v3M106.5 592v3M128.6 592v3M150.7 592v3M172.8 592v3M195.0 592v3M217.1 592v3M239.2 592v3M261.3 592v3M283.4 592v3M305.6 592v3M327.7 592v3M349.8 592v3M371.9 592v3M394.0 592v3M416.2 592v3M438.3 592v3M460.4 592v3M482.5 592v3M504.6 592v3M526.8 592v3M548.9 592v3M571.0 592v3M593.1 592v3M615.2 592v3M637.4 592v3M659.5 592v3" stroke="#a8a8ac" stroke-width="1"/></svg>
<svg class="a" style="left:13px;top:577px" width="10" height="14"><path d="M1.5 1.5H8.5V9L5 12.5L1.5 9Z" fill="#f4f4e0" stroke="#b8b8a8"/></svg>
<div class="a" style="left:8px;top:600px;width:784px;height:12px;background:#ebeaee"></div>
<div class="t" style="left:8.5px;top:601px;font-size:7px;color:#181818;letter-spacing:-0.15px">x 0.000 y -0.364 z 0.930</div>
<div class="a" style="left:8px;top:612px;width:784px;height:2px;background:#24505a"></div>
<div class="a" style="left:670px;top:574px;width:122px;height:38px;background:#ebeaee"></div>
<div class="ab" style="left:669.7px">|&lt;</div>
<div class="ab" style="left:682.0px">|&lt;</div>
<div class="ab" style="left:694.5px">&lt;&lt;</div>
<div class="ab" style="left:706.5px">&lt;</div>
<div class="ab" style="left:719.0px">&gt;</div>
<div class="ab" style="left:731.0px">&gt;&gt;</div>
<div class="ab" style="left:743.4px">&gt;|</div>
<div class="ab" style="left:755.3px">&gt;|</div>
<div class="nf" style="left:669.0px;width:22px">0</div>
<div class="nf" style="left:694.5px;width:22px"></div>
<div class="nf" style="left:718.0px;width:22px">30</div>
<div class="nf" style="left:742.5px;width:23px">30</div>
<div class="a" style="left:768px;top:575.5px;width:22px;height:22px;border:2px solid #3d62b8;border-radius:2px;background:linear-gradient(#fdfdfe,#e8ecf4 60%,#c4cce0);font-size:7.5px;letter-spacing:-0.3px;color:#111;text-align:center;line-height:17px">Anim</div>
<div class="a" style="left:673px;top:603px;width:53px;height:2px;background:#e0e0d6;border-top:1px solid #c8c8c0"></div>
<svg class="a" style="left:697px;top:599px" width="8" height="11"><rect x="1.5" y="1.5" width="5" height="8" rx="2" fill="#e8f4e8" stroke="#88a890"/></svg>
<div class="a" style="left:731.5px;top:600px;width:60px;height:12px;border:1px solid #7a7a7a;background:#fff"></div>
</body></html>
